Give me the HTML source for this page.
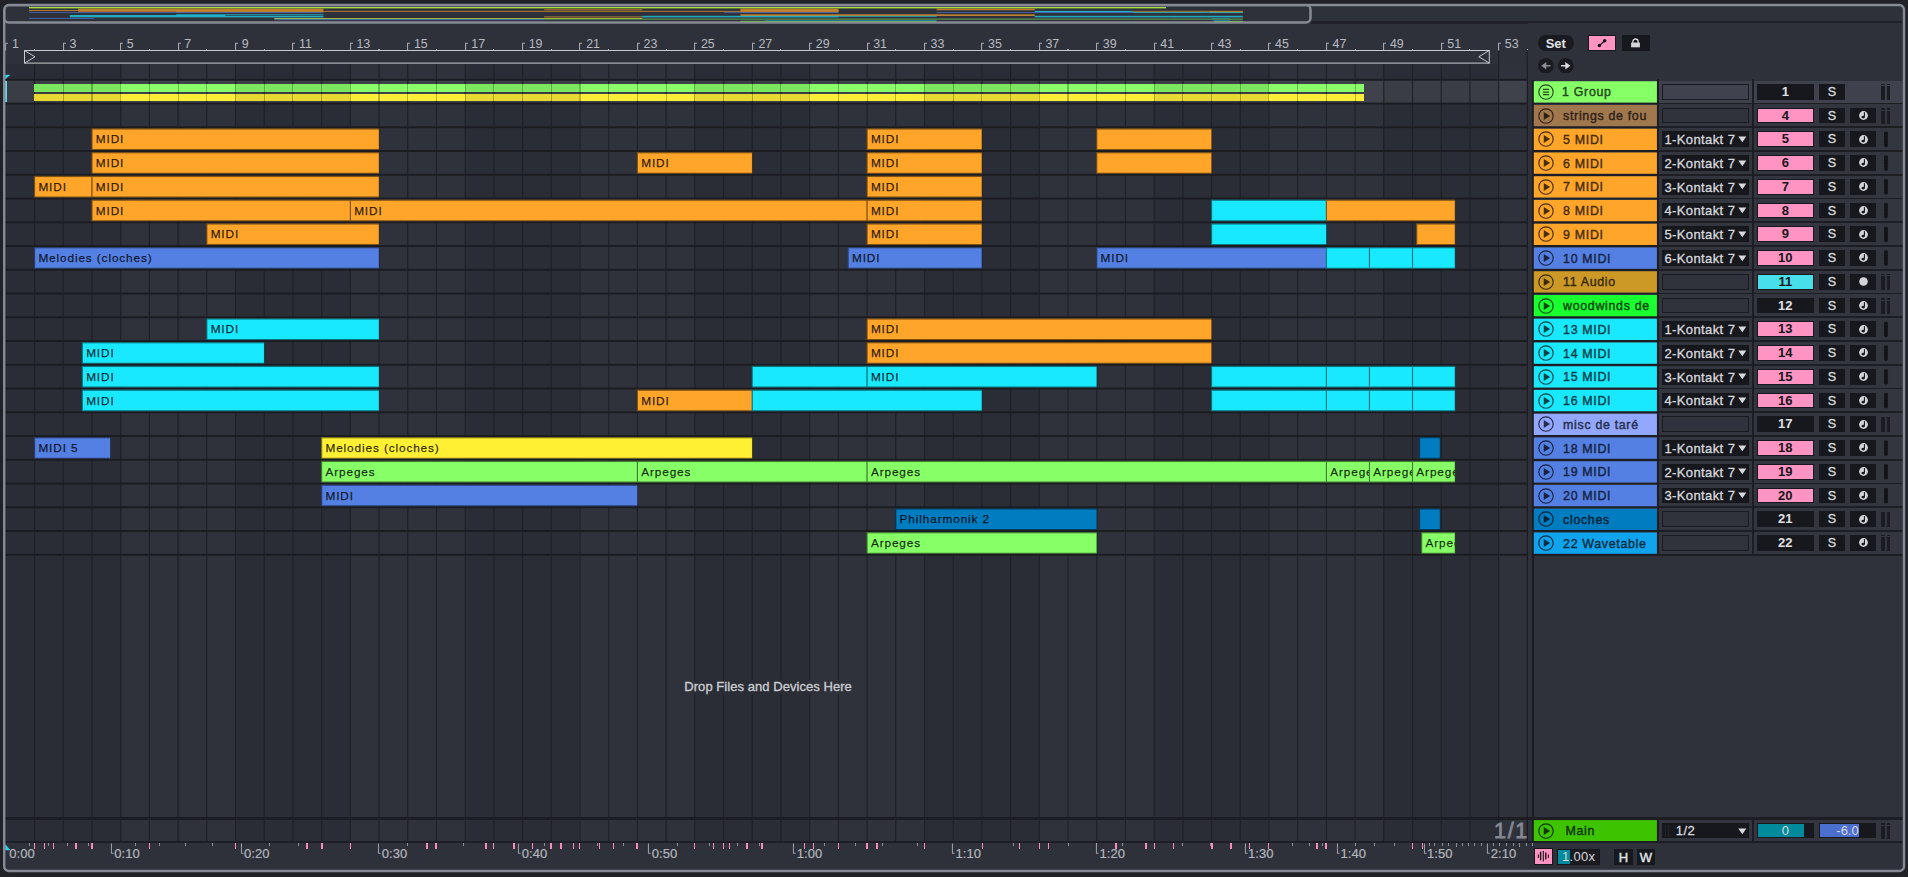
<!DOCTYPE html><html><head><meta charset="utf-8"><title>Arrangement</title><style>

html,body{margin:0;padding:0}
body{width:1908px;height:877px;overflow:hidden;position:relative;background:#212228;font-family:"Liberation Sans",sans-serif;font-size:13px;color:#c4c6cc}
div,span,svg{position:absolute;box-sizing:border-box}
.t{white-space:nowrap;line-height:1}
.clip{overflow:hidden}
.clip span{left:4.4px;top:5.35px;font-size:11.8px;letter-spacing:.88px;-webkit-text-stroke:.25px;color:rgba(0,0,0,.8);white-space:nowrap;line-height:1}
.hn{font-size:12.4px;letter-spacing:.68px;-webkit-text-stroke:.4px;white-space:nowrap;line-height:1}
.rt{font-size:13px;letter-spacing:.4px;-webkit-text-stroke:.3px;color:#d8dadf;white-space:nowrap;line-height:1}
.btn{background:#17181d;text-align:center;font-weight:normal;-webkit-text-stroke:.35px;font-size:12.6px;color:#d6d7db;line-height:1;white-space:nowrap}
.num{text-align:center;font-weight:bold;font-size:13px;line-height:1;white-space:nowrap}
.bn{font-size:12.4px;color:#b9bbc3;white-space:nowrap;line-height:1}
.tl{font-size:13px;letter-spacing:.1px;-webkit-text-stroke:.2px;color:#b4b6be;white-space:nowrap;line-height:1}

</style></head><body>
<div style="left:3.00px;top:4.00px;width:1902.00px;height:867.50px;background:#2e313a;border-radius:7px;"></div>
<div style="left:5.3px;top:64.0px;width:1521.70px;height:778.0px;overflow:hidden;background:#2a2d35">
<div style="left:114.83px;top:0.00px;width:114.83px;height:778.00px;background:#2f323b;"></div>
<div style="left:344.48px;top:0.00px;width:114.83px;height:778.00px;background:#2f323b;"></div>
<div style="left:574.14px;top:0.00px;width:114.83px;height:778.00px;background:#2f323b;"></div>
<div style="left:803.80px;top:0.00px;width:114.83px;height:778.00px;background:#2f323b;"></div>
<div style="left:1033.45px;top:0.00px;width:114.83px;height:778.00px;background:#2f323b;"></div>
<div style="left:1263.11px;top:0.00px;width:114.83px;height:778.00px;background:#2f323b;"></div>
<div style="left:1492.76px;top:0.00px;width:28.94px;height:778.00px;background:#2f323b;"></div>
</div>
<div style="left:5.30px;top:80.45px;width:1897.70px;height:22.40px;background:rgba(255,255,255,.078);"></div>
<svg style="left:0;top:0" width="1908" height="877" viewBox="0 0 1908 877"><rect x="34.01" y="64.0" width="1.15" height="778.0" fill="#1f2126"/><rect x="62.71" y="64.0" width="1.15" height="778.0" fill="#1f2126"/><rect x="91.42" y="64.0" width="1.15" height="778.0" fill="#1f2126"/><rect x="120.13" y="64.0" width="1.15" height="778.0" fill="#1f2126"/><rect x="148.84" y="64.0" width="1.15" height="778.0" fill="#1f2126"/><rect x="177.54" y="64.0" width="1.15" height="778.0" fill="#1f2126"/><rect x="206.25" y="64.0" width="1.15" height="778.0" fill="#1f2126"/><rect x="234.96" y="64.0" width="1.15" height="778.0" fill="#1f2126"/><rect x="263.66" y="64.0" width="1.15" height="778.0" fill="#1f2126"/><rect x="292.37" y="64.0" width="1.15" height="778.0" fill="#1f2126"/><rect x="321.08" y="64.0" width="1.15" height="778.0" fill="#1f2126"/><rect x="349.78" y="64.0" width="1.15" height="778.0" fill="#1f2126"/><rect x="378.49" y="64.0" width="1.15" height="778.0" fill="#1f2126"/><rect x="407.20" y="64.0" width="1.15" height="778.0" fill="#1f2126"/><rect x="435.91" y="64.0" width="1.15" height="778.0" fill="#1f2126"/><rect x="464.61" y="64.0" width="1.15" height="778.0" fill="#1f2126"/><rect x="493.32" y="64.0" width="1.15" height="778.0" fill="#1f2126"/><rect x="522.03" y="64.0" width="1.15" height="778.0" fill="#1f2126"/><rect x="550.73" y="64.0" width="1.15" height="778.0" fill="#1f2126"/><rect x="579.44" y="64.0" width="1.15" height="778.0" fill="#1f2126"/><rect x="608.15" y="64.0" width="1.15" height="778.0" fill="#1f2126"/><rect x="636.85" y="64.0" width="1.15" height="778.0" fill="#1f2126"/><rect x="665.56" y="64.0" width="1.15" height="778.0" fill="#1f2126"/><rect x="694.27" y="64.0" width="1.15" height="615.8" fill="#1f2126"/><rect x="694.27" y="694.2" width="1.15" height="147.79999999999995" fill="#1f2126"/><rect x="722.98" y="64.0" width="1.15" height="615.8" fill="#1f2126"/><rect x="722.98" y="694.2" width="1.15" height="147.79999999999995" fill="#1f2126"/><rect x="751.68" y="64.0" width="1.15" height="615.8" fill="#1f2126"/><rect x="751.68" y="694.2" width="1.15" height="147.79999999999995" fill="#1f2126"/><rect x="780.39" y="64.0" width="1.15" height="615.8" fill="#1f2126"/><rect x="780.39" y="694.2" width="1.15" height="147.79999999999995" fill="#1f2126"/><rect x="809.10" y="64.0" width="1.15" height="615.8" fill="#1f2126"/><rect x="809.10" y="694.2" width="1.15" height="147.79999999999995" fill="#1f2126"/><rect x="837.80" y="64.0" width="1.15" height="615.8" fill="#1f2126"/><rect x="837.80" y="694.2" width="1.15" height="147.79999999999995" fill="#1f2126"/><rect x="866.51" y="64.0" width="1.15" height="778.0" fill="#1f2126"/><rect x="895.22" y="64.0" width="1.15" height="778.0" fill="#1f2126"/><rect x="923.92" y="64.0" width="1.15" height="778.0" fill="#1f2126"/><rect x="952.63" y="64.0" width="1.15" height="778.0" fill="#1f2126"/><rect x="981.34" y="64.0" width="1.15" height="778.0" fill="#1f2126"/><rect x="1010.04" y="64.0" width="1.15" height="778.0" fill="#1f2126"/><rect x="1038.75" y="64.0" width="1.15" height="778.0" fill="#1f2126"/><rect x="1067.46" y="64.0" width="1.15" height="778.0" fill="#1f2126"/><rect x="1096.17" y="64.0" width="1.15" height="778.0" fill="#1f2126"/><rect x="1124.87" y="64.0" width="1.15" height="778.0" fill="#1f2126"/><rect x="1153.58" y="64.0" width="1.15" height="778.0" fill="#1f2126"/><rect x="1182.29" y="64.0" width="1.15" height="778.0" fill="#1f2126"/><rect x="1210.99" y="64.0" width="1.15" height="778.0" fill="#1f2126"/><rect x="1239.70" y="64.0" width="1.15" height="778.0" fill="#1f2126"/><rect x="1268.41" y="64.0" width="1.15" height="778.0" fill="#1f2126"/><rect x="1297.12" y="64.0" width="1.15" height="778.0" fill="#1f2126"/><rect x="1325.82" y="64.0" width="1.15" height="778.0" fill="#1f2126"/><rect x="1354.53" y="64.0" width="1.15" height="778.0" fill="#1f2126"/><rect x="1383.24" y="64.0" width="1.15" height="778.0" fill="#1f2126"/><rect x="1411.94" y="64.0" width="1.15" height="778.0" fill="#1f2126"/><rect x="1440.65" y="64.0" width="1.15" height="778.0" fill="#1f2126"/><rect x="1469.36" y="64.0" width="1.15" height="778.0" fill="#1f2126"/><rect x="1498.06" y="50.5" width="1.15" height="791.5" fill="#1f2126"/><rect x="1526.77" y="50.5" width="1.15" height="791.5" fill="#1f2126"/><rect x="5.3" y="78.85" width="1521.70" height="1.85" fill="#1b1c21"/><rect x="5.3" y="102.60" width="1521.70" height="1.85" fill="#1b1c21"/><rect x="5.3" y="126.35" width="1521.70" height="1.85" fill="#1b1c21"/><rect x="5.3" y="150.10" width="1521.70" height="1.85" fill="#1b1c21"/><rect x="5.3" y="173.85" width="1521.70" height="1.85" fill="#1b1c21"/><rect x="5.3" y="197.60" width="1521.70" height="1.85" fill="#1b1c21"/><rect x="5.3" y="221.35" width="1521.70" height="1.85" fill="#1b1c21"/><rect x="5.3" y="245.10" width="1521.70" height="1.85" fill="#1b1c21"/><rect x="5.3" y="268.85" width="1521.70" height="1.85" fill="#1b1c21"/><rect x="5.3" y="292.60" width="1521.70" height="1.85" fill="#1b1c21"/><rect x="5.3" y="316.35" width="1521.70" height="1.85" fill="#1b1c21"/><rect x="5.3" y="340.10" width="1521.70" height="1.85" fill="#1b1c21"/><rect x="5.3" y="363.85" width="1521.70" height="1.85" fill="#1b1c21"/><rect x="5.3" y="387.60" width="1521.70" height="1.85" fill="#1b1c21"/><rect x="5.3" y="411.35" width="1521.70" height="1.85" fill="#1b1c21"/><rect x="5.3" y="435.10" width="1521.70" height="1.85" fill="#1b1c21"/><rect x="5.3" y="458.85" width="1521.70" height="1.85" fill="#1b1c21"/><rect x="5.3" y="482.60" width="1521.70" height="1.85" fill="#1b1c21"/><rect x="5.3" y="506.35" width="1521.70" height="1.85" fill="#1b1c21"/><rect x="5.3" y="530.10" width="1521.70" height="1.85" fill="#1b1c21"/><rect x="5.3" y="553.85" width="1521.70" height="1.85" fill="#1b1c21"/></svg>
<div style="left:34.01px;top:80.75px;width:1330.28px;height:22px;overflow:hidden">
<div style="left:0.00px;top:3.00px;width:86.12px;height:8.50px;background:#7ce65f;"></div>
<div style="left:0.00px;top:13.05px;width:86.12px;height:7.20px;background:#e8d932;"></div>
<div style="left:86.12px;top:3.00px;width:114.83px;height:8.50px;background:#8afc69;"></div>
<div style="left:86.12px;top:13.05px;width:114.83px;height:7.20px;background:#ffee38;"></div>
<div style="left:200.95px;top:3.00px;width:114.83px;height:8.50px;background:#7ce65f;"></div>
<div style="left:200.95px;top:13.05px;width:114.83px;height:7.20px;background:#e8d932;"></div>
<div style="left:315.78px;top:3.00px;width:114.83px;height:8.50px;background:#8afc69;"></div>
<div style="left:315.78px;top:13.05px;width:114.83px;height:7.20px;background:#ffee38;"></div>
<div style="left:430.61px;top:3.00px;width:114.83px;height:8.50px;background:#7ce65f;"></div>
<div style="left:430.61px;top:13.05px;width:114.83px;height:7.20px;background:#e8d932;"></div>
<div style="left:545.43px;top:3.00px;width:114.83px;height:8.50px;background:#8afc69;"></div>
<div style="left:545.43px;top:13.05px;width:114.83px;height:7.20px;background:#ffee38;"></div>
<div style="left:660.26px;top:3.00px;width:114.83px;height:8.50px;background:#7ce65f;"></div>
<div style="left:660.26px;top:13.05px;width:114.83px;height:7.20px;background:#e8d932;"></div>
<div style="left:775.09px;top:3.00px;width:114.83px;height:8.50px;background:#8afc69;"></div>
<div style="left:775.09px;top:13.05px;width:114.83px;height:7.20px;background:#ffee38;"></div>
<div style="left:889.92px;top:3.00px;width:114.83px;height:8.50px;background:#7ce65f;"></div>
<div style="left:889.92px;top:13.05px;width:114.83px;height:7.20px;background:#e8d932;"></div>
<div style="left:1004.75px;top:3.00px;width:114.83px;height:8.50px;background:#8afc69;"></div>
<div style="left:1004.75px;top:13.05px;width:114.83px;height:7.20px;background:#ffee38;"></div>
<div style="left:1119.57px;top:3.00px;width:114.83px;height:8.50px;background:#7ce65f;"></div>
<div style="left:1119.57px;top:13.05px;width:114.83px;height:7.20px;background:#e8d932;"></div>
<div style="left:1234.40px;top:3.00px;width:95.88px;height:8.50px;background:#8afc69;"></div>
<div style="left:1234.40px;top:13.05px;width:95.88px;height:7.20px;background:#ffee38;"></div>
<div style="left:28.71px;top:3.00px;width:1.10px;height:8.50px;background:rgba(0,0,0,.25);"></div>
<div style="left:28.71px;top:13.05px;width:1.10px;height:7.20px;background:rgba(0,0,0,.25);"></div>
<div style="left:57.41px;top:3.00px;width:1.10px;height:8.50px;background:rgba(0,0,0,.25);"></div>
<div style="left:57.41px;top:13.05px;width:1.10px;height:7.20px;background:rgba(0,0,0,.25);"></div>
<div style="left:86.12px;top:3.00px;width:1.10px;height:8.50px;background:rgba(0,0,0,.25);"></div>
<div style="left:86.12px;top:13.05px;width:1.10px;height:7.20px;background:rgba(0,0,0,.25);"></div>
<div style="left:114.83px;top:3.00px;width:1.10px;height:8.50px;background:rgba(0,0,0,.25);"></div>
<div style="left:114.83px;top:13.05px;width:1.10px;height:7.20px;background:rgba(0,0,0,.25);"></div>
<div style="left:143.54px;top:3.00px;width:1.10px;height:8.50px;background:rgba(0,0,0,.25);"></div>
<div style="left:143.54px;top:13.05px;width:1.10px;height:7.20px;background:rgba(0,0,0,.25);"></div>
<div style="left:172.24px;top:3.00px;width:1.10px;height:8.50px;background:rgba(0,0,0,.25);"></div>
<div style="left:172.24px;top:13.05px;width:1.10px;height:7.20px;background:rgba(0,0,0,.25);"></div>
<div style="left:200.95px;top:3.00px;width:1.10px;height:8.50px;background:rgba(0,0,0,.25);"></div>
<div style="left:200.95px;top:13.05px;width:1.10px;height:7.20px;background:rgba(0,0,0,.25);"></div>
<div style="left:229.66px;top:3.00px;width:1.10px;height:8.50px;background:rgba(0,0,0,.25);"></div>
<div style="left:229.66px;top:13.05px;width:1.10px;height:7.20px;background:rgba(0,0,0,.25);"></div>
<div style="left:258.36px;top:3.00px;width:1.10px;height:8.50px;background:rgba(0,0,0,.25);"></div>
<div style="left:258.36px;top:13.05px;width:1.10px;height:7.20px;background:rgba(0,0,0,.25);"></div>
<div style="left:287.07px;top:3.00px;width:1.10px;height:8.50px;background:rgba(0,0,0,.25);"></div>
<div style="left:287.07px;top:13.05px;width:1.10px;height:7.20px;background:rgba(0,0,0,.25);"></div>
<div style="left:315.78px;top:3.00px;width:1.10px;height:8.50px;background:rgba(0,0,0,.25);"></div>
<div style="left:315.78px;top:13.05px;width:1.10px;height:7.20px;background:rgba(0,0,0,.25);"></div>
<div style="left:344.48px;top:3.00px;width:1.10px;height:8.50px;background:rgba(0,0,0,.25);"></div>
<div style="left:344.48px;top:13.05px;width:1.10px;height:7.20px;background:rgba(0,0,0,.25);"></div>
<div style="left:373.19px;top:3.00px;width:1.10px;height:8.50px;background:rgba(0,0,0,.25);"></div>
<div style="left:373.19px;top:13.05px;width:1.10px;height:7.20px;background:rgba(0,0,0,.25);"></div>
<div style="left:401.90px;top:3.00px;width:1.10px;height:8.50px;background:rgba(0,0,0,.25);"></div>
<div style="left:401.90px;top:13.05px;width:1.10px;height:7.20px;background:rgba(0,0,0,.25);"></div>
<div style="left:430.61px;top:3.00px;width:1.10px;height:8.50px;background:rgba(0,0,0,.25);"></div>
<div style="left:430.61px;top:13.05px;width:1.10px;height:7.20px;background:rgba(0,0,0,.25);"></div>
<div style="left:459.31px;top:3.00px;width:1.10px;height:8.50px;background:rgba(0,0,0,.25);"></div>
<div style="left:459.31px;top:13.05px;width:1.10px;height:7.20px;background:rgba(0,0,0,.25);"></div>
<div style="left:488.02px;top:3.00px;width:1.10px;height:8.50px;background:rgba(0,0,0,.25);"></div>
<div style="left:488.02px;top:13.05px;width:1.10px;height:7.20px;background:rgba(0,0,0,.25);"></div>
<div style="left:516.73px;top:3.00px;width:1.10px;height:8.50px;background:rgba(0,0,0,.25);"></div>
<div style="left:516.73px;top:13.05px;width:1.10px;height:7.20px;background:rgba(0,0,0,.25);"></div>
<div style="left:545.43px;top:3.00px;width:1.10px;height:8.50px;background:rgba(0,0,0,.25);"></div>
<div style="left:545.43px;top:13.05px;width:1.10px;height:7.20px;background:rgba(0,0,0,.25);"></div>
<div style="left:574.14px;top:3.00px;width:1.10px;height:8.50px;background:rgba(0,0,0,.25);"></div>
<div style="left:574.14px;top:13.05px;width:1.10px;height:7.20px;background:rgba(0,0,0,.25);"></div>
<div style="left:602.85px;top:3.00px;width:1.10px;height:8.50px;background:rgba(0,0,0,.25);"></div>
<div style="left:602.85px;top:13.05px;width:1.10px;height:7.20px;background:rgba(0,0,0,.25);"></div>
<div style="left:631.55px;top:3.00px;width:1.10px;height:8.50px;background:rgba(0,0,0,.25);"></div>
<div style="left:631.55px;top:13.05px;width:1.10px;height:7.20px;background:rgba(0,0,0,.25);"></div>
<div style="left:660.26px;top:3.00px;width:1.10px;height:8.50px;background:rgba(0,0,0,.25);"></div>
<div style="left:660.26px;top:13.05px;width:1.10px;height:7.20px;background:rgba(0,0,0,.25);"></div>
<div style="left:688.97px;top:3.00px;width:1.10px;height:8.50px;background:rgba(0,0,0,.25);"></div>
<div style="left:688.97px;top:13.05px;width:1.10px;height:7.20px;background:rgba(0,0,0,.25);"></div>
<div style="left:717.68px;top:3.00px;width:1.10px;height:8.50px;background:rgba(0,0,0,.25);"></div>
<div style="left:717.68px;top:13.05px;width:1.10px;height:7.20px;background:rgba(0,0,0,.25);"></div>
<div style="left:746.38px;top:3.00px;width:1.10px;height:8.50px;background:rgba(0,0,0,.25);"></div>
<div style="left:746.38px;top:13.05px;width:1.10px;height:7.20px;background:rgba(0,0,0,.25);"></div>
<div style="left:775.09px;top:3.00px;width:1.10px;height:8.50px;background:rgba(0,0,0,.25);"></div>
<div style="left:775.09px;top:13.05px;width:1.10px;height:7.20px;background:rgba(0,0,0,.25);"></div>
<div style="left:803.80px;top:3.00px;width:1.10px;height:8.50px;background:rgba(0,0,0,.25);"></div>
<div style="left:803.80px;top:13.05px;width:1.10px;height:7.20px;background:rgba(0,0,0,.25);"></div>
<div style="left:832.50px;top:3.00px;width:1.10px;height:8.50px;background:rgba(0,0,0,.25);"></div>
<div style="left:832.50px;top:13.05px;width:1.10px;height:7.20px;background:rgba(0,0,0,.25);"></div>
<div style="left:861.21px;top:3.00px;width:1.10px;height:8.50px;background:rgba(0,0,0,.25);"></div>
<div style="left:861.21px;top:13.05px;width:1.10px;height:7.20px;background:rgba(0,0,0,.25);"></div>
<div style="left:889.92px;top:3.00px;width:1.10px;height:8.50px;background:rgba(0,0,0,.25);"></div>
<div style="left:889.92px;top:13.05px;width:1.10px;height:7.20px;background:rgba(0,0,0,.25);"></div>
<div style="left:918.62px;top:3.00px;width:1.10px;height:8.50px;background:rgba(0,0,0,.25);"></div>
<div style="left:918.62px;top:13.05px;width:1.10px;height:7.20px;background:rgba(0,0,0,.25);"></div>
<div style="left:947.33px;top:3.00px;width:1.10px;height:8.50px;background:rgba(0,0,0,.25);"></div>
<div style="left:947.33px;top:13.05px;width:1.10px;height:7.20px;background:rgba(0,0,0,.25);"></div>
<div style="left:976.04px;top:3.00px;width:1.10px;height:8.50px;background:rgba(0,0,0,.25);"></div>
<div style="left:976.04px;top:13.05px;width:1.10px;height:7.20px;background:rgba(0,0,0,.25);"></div>
<div style="left:1004.75px;top:3.00px;width:1.10px;height:8.50px;background:rgba(0,0,0,.25);"></div>
<div style="left:1004.75px;top:13.05px;width:1.10px;height:7.20px;background:rgba(0,0,0,.25);"></div>
<div style="left:1033.45px;top:3.00px;width:1.10px;height:8.50px;background:rgba(0,0,0,.25);"></div>
<div style="left:1033.45px;top:13.05px;width:1.10px;height:7.20px;background:rgba(0,0,0,.25);"></div>
<div style="left:1062.16px;top:3.00px;width:1.10px;height:8.50px;background:rgba(0,0,0,.25);"></div>
<div style="left:1062.16px;top:13.05px;width:1.10px;height:7.20px;background:rgba(0,0,0,.25);"></div>
<div style="left:1090.87px;top:3.00px;width:1.10px;height:8.50px;background:rgba(0,0,0,.25);"></div>
<div style="left:1090.87px;top:13.05px;width:1.10px;height:7.20px;background:rgba(0,0,0,.25);"></div>
<div style="left:1119.57px;top:3.00px;width:1.10px;height:8.50px;background:rgba(0,0,0,.25);"></div>
<div style="left:1119.57px;top:13.05px;width:1.10px;height:7.20px;background:rgba(0,0,0,.25);"></div>
<div style="left:1148.28px;top:3.00px;width:1.10px;height:8.50px;background:rgba(0,0,0,.25);"></div>
<div style="left:1148.28px;top:13.05px;width:1.10px;height:7.20px;background:rgba(0,0,0,.25);"></div>
<div style="left:1176.99px;top:3.00px;width:1.10px;height:8.50px;background:rgba(0,0,0,.25);"></div>
<div style="left:1176.99px;top:13.05px;width:1.10px;height:7.20px;background:rgba(0,0,0,.25);"></div>
<div style="left:1205.69px;top:3.00px;width:1.10px;height:8.50px;background:rgba(0,0,0,.25);"></div>
<div style="left:1205.69px;top:13.05px;width:1.10px;height:7.20px;background:rgba(0,0,0,.25);"></div>
<div style="left:1234.40px;top:3.00px;width:1.10px;height:8.50px;background:rgba(0,0,0,.25);"></div>
<div style="left:1234.40px;top:13.05px;width:1.10px;height:7.20px;background:rgba(0,0,0,.25);"></div>
<div style="left:1263.11px;top:3.00px;width:1.10px;height:8.50px;background:rgba(0,0,0,.25);"></div>
<div style="left:1263.11px;top:13.05px;width:1.10px;height:7.20px;background:rgba(0,0,0,.25);"></div>
<div style="left:1291.81px;top:3.00px;width:1.10px;height:8.50px;background:rgba(0,0,0,.25);"></div>
<div style="left:1291.81px;top:13.05px;width:1.10px;height:7.20px;background:rgba(0,0,0,.25);"></div>
<div style="left:1320.52px;top:3.00px;width:1.10px;height:8.50px;background:rgba(0,0,0,.25);"></div>
<div style="left:1320.52px;top:13.05px;width:1.10px;height:7.20px;background:rgba(0,0,0,.25);"></div>
</div>
<svg style="left:0;top:0" width="1908" height="877" viewBox="0 0 1908 877"><rect x="91.42" y="128.30" width="287.77" height="21.7" fill="#7f5214"/><rect x="92.57" y="129.55" width="286.17" height="19.45" fill="#ffa529"/><rect x="866.51" y="128.30" width="115.53" height="21.7" fill="#7f5214"/><rect x="867.66" y="129.55" width="113.93" height="19.45" fill="#ffa529"/><rect x="1096.17" y="128.30" width="115.53" height="21.7" fill="#7f5214"/><rect x="1097.32" y="129.55" width="113.93" height="19.45" fill="#ffa529"/><rect x="91.42" y="152.05" width="287.77" height="21.7" fill="#7f5214"/><rect x="92.57" y="153.30" width="286.17" height="19.45" fill="#ffa529"/><rect x="636.85" y="152.05" width="115.53" height="21.7" fill="#7f5214"/><rect x="638.00" y="153.30" width="113.93" height="19.45" fill="#ffa529"/><rect x="866.51" y="152.05" width="115.53" height="21.7" fill="#7f5214"/><rect x="867.66" y="153.30" width="113.93" height="19.45" fill="#ffa529"/><rect x="1096.17" y="152.05" width="115.53" height="21.7" fill="#7f5214"/><rect x="1097.32" y="153.30" width="113.93" height="19.45" fill="#ffa529"/><rect x="34.01" y="175.80" width="58.11" height="21.7" fill="#7f5214"/><rect x="35.16" y="177.05" width="56.51" height="19.45" fill="#ffa529"/><rect x="91.42" y="175.80" width="287.77" height="21.7" fill="#7f5214"/><rect x="92.57" y="177.05" width="286.17" height="19.45" fill="#ffa529"/><rect x="866.51" y="175.80" width="115.53" height="21.7" fill="#7f5214"/><rect x="867.66" y="177.05" width="113.93" height="19.45" fill="#ffa529"/><rect x="91.42" y="199.55" width="259.06" height="21.7" fill="#7f5214"/><rect x="92.57" y="200.80" width="257.46" height="19.45" fill="#ffa529"/><rect x="349.78" y="199.55" width="517.43" height="21.7" fill="#7f5214"/><rect x="350.93" y="200.80" width="515.83" height="19.45" fill="#ffa529"/><rect x="866.51" y="199.55" width="115.53" height="21.7" fill="#7f5214"/><rect x="867.66" y="200.80" width="113.93" height="19.45" fill="#ffa529"/><rect x="1210.99" y="199.55" width="115.53" height="21.7" fill="#0c747f"/><rect x="1212.14" y="200.80" width="113.93" height="19.45" fill="#19e9ff"/><rect x="1325.82" y="199.55" width="129.31" height="21.7" fill="#7f5214"/><rect x="1326.97" y="200.80" width="127.71" height="19.45" fill="#ffa529"/><rect x="206.25" y="223.30" width="172.94" height="21.7" fill="#7f5214"/><rect x="207.40" y="224.55" width="171.34" height="19.45" fill="#ffa529"/><rect x="866.51" y="223.30" width="115.53" height="21.7" fill="#7f5214"/><rect x="867.66" y="224.55" width="113.93" height="19.45" fill="#ffa529"/><rect x="1210.99" y="223.30" width="115.53" height="21.7" fill="#0c747f"/><rect x="1212.14" y="224.55" width="113.93" height="19.45" fill="#19e9ff"/><rect x="1416.11" y="223.30" width="39.02" height="21.7" fill="#7f5214"/><rect x="1417.26" y="224.55" width="37.42" height="19.45" fill="#ffa529"/><rect x="34.01" y="247.05" width="345.18" height="21.7" fill="#2a4072"/><rect x="35.16" y="248.30" width="343.58" height="19.45" fill="#5480e4"/><rect x="847.56" y="247.05" width="134.47" height="21.7" fill="#2a4072"/><rect x="848.71" y="248.30" width="132.87" height="19.45" fill="#5480e4"/><rect x="1096.17" y="247.05" width="230.36" height="21.7" fill="#2a4072"/><rect x="1097.32" y="248.30" width="228.76" height="19.45" fill="#5480e4"/><rect x="1325.82" y="247.05" width="43.76" height="21.7" fill="#0c747f"/><rect x="1326.97" y="248.30" width="42.16" height="19.45" fill="#19e9ff"/><rect x="1368.88" y="247.05" width="43.76" height="21.7" fill="#0c747f"/><rect x="1370.03" y="248.30" width="42.16" height="19.45" fill="#19e9ff"/><rect x="1411.94" y="247.05" width="43.19" height="21.7" fill="#0c747f"/><rect x="1413.09" y="248.30" width="41.59" height="19.45" fill="#19e9ff"/><rect x="206.25" y="318.30" width="172.94" height="21.7" fill="#0c747f"/><rect x="207.40" y="319.55" width="171.34" height="19.45" fill="#19e9ff"/><rect x="866.51" y="318.30" width="345.18" height="21.7" fill="#7f5214"/><rect x="867.66" y="319.55" width="343.58" height="19.45" fill="#ffa529"/><rect x="81.78" y="342.05" width="182.59" height="21.7" fill="#0c747f"/><rect x="82.93" y="343.30" width="180.99" height="19.45" fill="#19e9ff"/><rect x="866.51" y="342.05" width="345.18" height="21.7" fill="#7f5214"/><rect x="867.66" y="343.30" width="343.58" height="19.45" fill="#ffa529"/><rect x="81.78" y="365.80" width="297.42" height="21.7" fill="#0c747f"/><rect x="82.93" y="367.05" width="295.82" height="19.45" fill="#19e9ff"/><rect x="751.68" y="365.80" width="115.53" height="21.7" fill="#0c747f"/><rect x="752.83" y="367.05" width="113.93" height="19.45" fill="#19e9ff"/><rect x="866.51" y="365.80" width="230.36" height="21.7" fill="#0c747f"/><rect x="867.66" y="367.05" width="228.76" height="19.45" fill="#19e9ff"/><rect x="1210.99" y="365.80" width="115.53" height="21.7" fill="#0c747f"/><rect x="1212.14" y="367.05" width="113.93" height="19.45" fill="#19e9ff"/><rect x="1325.82" y="365.80" width="43.76" height="21.7" fill="#0c747f"/><rect x="1326.97" y="367.05" width="42.16" height="19.45" fill="#19e9ff"/><rect x="1368.88" y="365.80" width="43.76" height="21.7" fill="#0c747f"/><rect x="1370.03" y="367.05" width="42.16" height="19.45" fill="#19e9ff"/><rect x="1411.94" y="365.80" width="43.19" height="21.7" fill="#0c747f"/><rect x="1413.09" y="367.05" width="41.59" height="19.45" fill="#19e9ff"/><rect x="81.78" y="389.55" width="297.42" height="21.7" fill="#0c747f"/><rect x="82.93" y="390.80" width="295.82" height="19.45" fill="#19e9ff"/><rect x="636.85" y="389.55" width="115.53" height="21.7" fill="#7f5214"/><rect x="638.00" y="390.80" width="113.93" height="19.45" fill="#ffa529"/><rect x="751.68" y="389.55" width="230.36" height="21.7" fill="#0c747f"/><rect x="752.83" y="390.80" width="228.76" height="19.45" fill="#19e9ff"/><rect x="1210.99" y="389.55" width="115.53" height="21.7" fill="#0c747f"/><rect x="1212.14" y="390.80" width="113.93" height="19.45" fill="#19e9ff"/><rect x="1325.82" y="389.55" width="43.76" height="21.7" fill="#0c747f"/><rect x="1326.97" y="390.80" width="42.16" height="19.45" fill="#19e9ff"/><rect x="1368.88" y="389.55" width="43.76" height="21.7" fill="#0c747f"/><rect x="1370.03" y="390.80" width="42.16" height="19.45" fill="#19e9ff"/><rect x="1411.94" y="389.55" width="43.19" height="21.7" fill="#0c747f"/><rect x="1413.09" y="390.80" width="41.59" height="19.45" fill="#19e9ff"/><rect x="34.01" y="437.05" width="76.49" height="21.7" fill="#2a4072"/><rect x="35.16" y="438.30" width="74.89" height="19.45" fill="#5480e4"/><rect x="321.08" y="437.05" width="431.31" height="21.7" fill="#7f781a"/><rect x="322.23" y="438.30" width="429.71" height="19.45" fill="#fff034"/><rect x="1418.98" y="437.05" width="21.23" height="21.7" fill="#003e60"/><rect x="1420.13" y="438.30" width="19.63" height="19.45" fill="#007dc0"/><rect x="321.08" y="460.80" width="316.48" height="21.7" fill="#437f33"/><rect x="322.23" y="462.05" width="314.88" height="19.45" fill="#87ff67"/><rect x="636.85" y="460.80" width="230.36" height="21.7" fill="#437f33"/><rect x="638.00" y="462.05" width="228.76" height="19.45" fill="#87ff67"/><rect x="866.51" y="460.80" width="460.01" height="21.7" fill="#437f33"/><rect x="867.66" y="462.05" width="458.41" height="19.45" fill="#87ff67"/><rect x="1325.82" y="460.80" width="43.76" height="21.7" fill="#437f33"/><rect x="1326.97" y="462.05" width="42.16" height="19.45" fill="#87ff67"/><rect x="1368.88" y="460.80" width="43.76" height="21.7" fill="#437f33"/><rect x="1370.03" y="462.05" width="42.16" height="19.45" fill="#87ff67"/><rect x="1411.94" y="460.80" width="43.19" height="21.7" fill="#437f33"/><rect x="1413.09" y="462.05" width="41.59" height="19.45" fill="#87ff67"/><rect x="321.08" y="484.55" width="316.48" height="21.7" fill="#2a4072"/><rect x="322.23" y="485.80" width="314.88" height="19.45" fill="#5480e4"/><rect x="895.22" y="508.30" width="201.65" height="21.7" fill="#003e60"/><rect x="896.37" y="509.55" width="200.05" height="19.45" fill="#007dc0"/><rect x="1418.98" y="508.30" width="21.23" height="21.7" fill="#003e60"/><rect x="1420.13" y="509.55" width="19.63" height="19.45" fill="#007dc0"/><rect x="866.51" y="532.05" width="230.36" height="21.7" fill="#437f33"/><rect x="867.66" y="533.30" width="228.76" height="19.45" fill="#87ff67"/><rect x="1421.13" y="532.05" width="34.00" height="21.7" fill="#437f33"/><rect x="1422.28" y="533.30" width="32.40" height="19.45" fill="#87ff67"/></svg>
<div class="clip" style="left:91.42px;top:129.05px;width:287.17px;height:20.4px"><span>MIDI</span></div>
<div class="clip" style="left:866.51px;top:129.05px;width:114.93px;height:20.4px"><span>MIDI</span></div>
<div class="clip" style="left:91.42px;top:152.80px;width:287.17px;height:20.4px"><span>MIDI</span></div>
<div class="clip" style="left:636.85px;top:152.80px;width:114.93px;height:20.4px"><span>MIDI</span></div>
<div class="clip" style="left:866.51px;top:152.80px;width:114.93px;height:20.4px"><span>MIDI</span></div>
<div class="clip" style="left:34.01px;top:176.55px;width:57.51px;height:20.4px"><span>MIDI</span></div>
<div class="clip" style="left:91.42px;top:176.55px;width:287.17px;height:20.4px"><span>MIDI</span></div>
<div class="clip" style="left:866.51px;top:176.55px;width:114.93px;height:20.4px"><span>MIDI</span></div>
<div class="clip" style="left:91.42px;top:200.30px;width:258.46px;height:20.4px"><span>MIDI</span></div>
<div class="clip" style="left:349.78px;top:200.30px;width:516.83px;height:20.4px"><span>MIDI</span></div>
<div class="clip" style="left:866.51px;top:200.30px;width:114.93px;height:20.4px"><span>MIDI</span></div>
<div class="clip" style="left:206.25px;top:224.05px;width:172.34px;height:20.4px"><span>MIDI</span></div>
<div class="clip" style="left:866.51px;top:224.05px;width:114.93px;height:20.4px"><span>MIDI</span></div>
<div class="clip" style="left:34.01px;top:247.80px;width:344.58px;height:20.4px"><span>Melodies (cloches)</span></div>
<div class="clip" style="left:847.56px;top:247.80px;width:133.87px;height:20.4px"><span>MIDI</span></div>
<div class="clip" style="left:1096.17px;top:247.80px;width:229.76px;height:20.4px"><span>MIDI</span></div>
<div class="clip" style="left:206.25px;top:319.05px;width:172.34px;height:20.4px"><span>MIDI</span></div>
<div class="clip" style="left:866.51px;top:319.05px;width:344.58px;height:20.4px"><span>MIDI</span></div>
<div class="clip" style="left:81.78px;top:342.80px;width:181.99px;height:20.4px"><span>MIDI</span></div>
<div class="clip" style="left:866.51px;top:342.80px;width:344.58px;height:20.4px"><span>MIDI</span></div>
<div class="clip" style="left:81.78px;top:366.55px;width:296.82px;height:20.4px"><span>MIDI</span></div>
<div class="clip" style="left:866.51px;top:366.55px;width:229.76px;height:20.4px"><span>MIDI</span></div>
<div class="clip" style="left:81.78px;top:390.30px;width:296.82px;height:20.4px"><span>MIDI</span></div>
<div class="clip" style="left:636.85px;top:390.30px;width:114.93px;height:20.4px"><span>MIDI</span></div>
<div class="clip" style="left:34.01px;top:437.80px;width:75.89px;height:20.4px"><span>MIDI 5</span></div>
<div class="clip" style="left:321.08px;top:437.80px;width:430.71px;height:20.4px"><span>Melodies (cloches)</span></div>
<div class="clip" style="left:321.08px;top:461.55px;width:315.88px;height:20.4px"><span>Arpeges</span></div>
<div class="clip" style="left:636.85px;top:461.55px;width:229.76px;height:20.4px"><span>Arpeges</span></div>
<div class="clip" style="left:866.51px;top:461.55px;width:459.41px;height:20.4px"><span>Arpeges</span></div>
<div class="clip" style="left:1325.82px;top:461.55px;width:43.16px;height:20.4px"><span>Arpeges</span></div>
<div class="clip" style="left:1368.88px;top:461.55px;width:43.16px;height:20.4px"><span>Arpeges</span></div>
<div class="clip" style="left:1411.94px;top:461.55px;width:42.59px;height:20.4px"><span>Arpeges</span></div>
<div class="clip" style="left:321.08px;top:485.30px;width:315.88px;height:20.4px"><span>MIDI</span></div>
<div class="clip" style="left:895.22px;top:509.05px;width:201.05px;height:20.4px"><span>Philharmonik 2</span></div>
<div class="clip" style="left:866.51px;top:532.80px;width:229.76px;height:20.4px"><span>Arpeges</span></div>
<div class="clip" style="left:1421.13px;top:532.80px;width:33.40px;height:20.4px"><span>Arpeges</span></div>
<div style="left:5.20px;top:80.75px;width:1.70px;height:21.60px;background:#5fd8ee;"></div>
<svg style="left:5px;top:73.5px" width="7" height="6" viewBox="0 0 7 6"><path d="M0.2 0.8 L5.4 0.8 L0.2 5.2 Z" fill="#2fd3ee"/></svg>
<div class="t" style="left:684.3px;top:680.3px;font-size:13px;letter-spacing:.05px;-webkit-text-stroke:.35px;color:#c9cbd1">Drop Files and Devices Here</div>
<div class="t" style="left:1494px;top:821.1px;font-size:21.5px;color:#858892;-webkit-text-stroke:.8px;letter-spacing:1.7px">1/1</div>
<svg style="left:4.30px;top:42px" width="6" height="9" viewBox="0 0 6 9"><path d="M1.55 8.5 V1.3 H4" fill="none" stroke="#a3a6ae" stroke-width="1.1"/></svg>
<div class="bn" style="left:12.00px;top:37.6px">1</div>
<svg style="left:61.71px;top:42px" width="6" height="9" viewBox="0 0 6 9"><path d="M1.55 8.5 V1.3 H4" fill="none" stroke="#a3a6ae" stroke-width="1.1"/></svg>
<div class="bn" style="left:69.41px;top:37.6px">3</div>
<svg style="left:119.13px;top:42px" width="6" height="9" viewBox="0 0 6 9"><path d="M1.55 8.5 V1.3 H4" fill="none" stroke="#a3a6ae" stroke-width="1.1"/></svg>
<div class="bn" style="left:126.83px;top:37.6px">5</div>
<svg style="left:176.54px;top:42px" width="6" height="9" viewBox="0 0 6 9"><path d="M1.55 8.5 V1.3 H4" fill="none" stroke="#a3a6ae" stroke-width="1.1"/></svg>
<div class="bn" style="left:184.24px;top:37.6px">7</div>
<svg style="left:233.96px;top:42px" width="6" height="9" viewBox="0 0 6 9"><path d="M1.55 8.5 V1.3 H4" fill="none" stroke="#a3a6ae" stroke-width="1.1"/></svg>
<div class="bn" style="left:241.66px;top:37.6px">9</div>
<svg style="left:291.37px;top:42px" width="6" height="9" viewBox="0 0 6 9"><path d="M1.55 8.5 V1.3 H4" fill="none" stroke="#a3a6ae" stroke-width="1.1"/></svg>
<div class="bn" style="left:299.07px;top:37.6px">11</div>
<svg style="left:348.78px;top:42px" width="6" height="9" viewBox="0 0 6 9"><path d="M1.55 8.5 V1.3 H4" fill="none" stroke="#a3a6ae" stroke-width="1.1"/></svg>
<div class="bn" style="left:356.48px;top:37.6px">13</div>
<svg style="left:406.20px;top:42px" width="6" height="9" viewBox="0 0 6 9"><path d="M1.55 8.5 V1.3 H4" fill="none" stroke="#a3a6ae" stroke-width="1.1"/></svg>
<div class="bn" style="left:413.90px;top:37.6px">15</div>
<svg style="left:463.61px;top:42px" width="6" height="9" viewBox="0 0 6 9"><path d="M1.55 8.5 V1.3 H4" fill="none" stroke="#a3a6ae" stroke-width="1.1"/></svg>
<div class="bn" style="left:471.31px;top:37.6px">17</div>
<svg style="left:521.03px;top:42px" width="6" height="9" viewBox="0 0 6 9"><path d="M1.55 8.5 V1.3 H4" fill="none" stroke="#a3a6ae" stroke-width="1.1"/></svg>
<div class="bn" style="left:528.73px;top:37.6px">19</div>
<svg style="left:578.44px;top:42px" width="6" height="9" viewBox="0 0 6 9"><path d="M1.55 8.5 V1.3 H4" fill="none" stroke="#a3a6ae" stroke-width="1.1"/></svg>
<div class="bn" style="left:586.14px;top:37.6px">21</div>
<svg style="left:635.85px;top:42px" width="6" height="9" viewBox="0 0 6 9"><path d="M1.55 8.5 V1.3 H4" fill="none" stroke="#a3a6ae" stroke-width="1.1"/></svg>
<div class="bn" style="left:643.55px;top:37.6px">23</div>
<svg style="left:693.27px;top:42px" width="6" height="9" viewBox="0 0 6 9"><path d="M1.55 8.5 V1.3 H4" fill="none" stroke="#a3a6ae" stroke-width="1.1"/></svg>
<div class="bn" style="left:700.97px;top:37.6px">25</div>
<svg style="left:750.68px;top:42px" width="6" height="9" viewBox="0 0 6 9"><path d="M1.55 8.5 V1.3 H4" fill="none" stroke="#a3a6ae" stroke-width="1.1"/></svg>
<div class="bn" style="left:758.38px;top:37.6px">27</div>
<svg style="left:808.10px;top:42px" width="6" height="9" viewBox="0 0 6 9"><path d="M1.55 8.5 V1.3 H4" fill="none" stroke="#a3a6ae" stroke-width="1.1"/></svg>
<div class="bn" style="left:815.80px;top:37.6px">29</div>
<svg style="left:865.51px;top:42px" width="6" height="9" viewBox="0 0 6 9"><path d="M1.55 8.5 V1.3 H4" fill="none" stroke="#a3a6ae" stroke-width="1.1"/></svg>
<div class="bn" style="left:873.21px;top:37.6px">31</div>
<svg style="left:922.92px;top:42px" width="6" height="9" viewBox="0 0 6 9"><path d="M1.55 8.5 V1.3 H4" fill="none" stroke="#a3a6ae" stroke-width="1.1"/></svg>
<div class="bn" style="left:930.62px;top:37.6px">33</div>
<svg style="left:980.34px;top:42px" width="6" height="9" viewBox="0 0 6 9"><path d="M1.55 8.5 V1.3 H4" fill="none" stroke="#a3a6ae" stroke-width="1.1"/></svg>
<div class="bn" style="left:988.04px;top:37.6px">35</div>
<svg style="left:1037.75px;top:42px" width="6" height="9" viewBox="0 0 6 9"><path d="M1.55 8.5 V1.3 H4" fill="none" stroke="#a3a6ae" stroke-width="1.1"/></svg>
<div class="bn" style="left:1045.45px;top:37.6px">37</div>
<svg style="left:1095.17px;top:42px" width="6" height="9" viewBox="0 0 6 9"><path d="M1.55 8.5 V1.3 H4" fill="none" stroke="#a3a6ae" stroke-width="1.1"/></svg>
<div class="bn" style="left:1102.87px;top:37.6px">39</div>
<svg style="left:1152.58px;top:42px" width="6" height="9" viewBox="0 0 6 9"><path d="M1.55 8.5 V1.3 H4" fill="none" stroke="#a3a6ae" stroke-width="1.1"/></svg>
<div class="bn" style="left:1160.28px;top:37.6px">41</div>
<svg style="left:1209.99px;top:42px" width="6" height="9" viewBox="0 0 6 9"><path d="M1.55 8.5 V1.3 H4" fill="none" stroke="#a3a6ae" stroke-width="1.1"/></svg>
<div class="bn" style="left:1217.69px;top:37.6px">43</div>
<svg style="left:1267.41px;top:42px" width="6" height="9" viewBox="0 0 6 9"><path d="M1.55 8.5 V1.3 H4" fill="none" stroke="#a3a6ae" stroke-width="1.1"/></svg>
<div class="bn" style="left:1275.11px;top:37.6px">45</div>
<svg style="left:1324.82px;top:42px" width="6" height="9" viewBox="0 0 6 9"><path d="M1.55 8.5 V1.3 H4" fill="none" stroke="#a3a6ae" stroke-width="1.1"/></svg>
<div class="bn" style="left:1332.52px;top:37.6px">47</div>
<svg style="left:1382.24px;top:42px" width="6" height="9" viewBox="0 0 6 9"><path d="M1.55 8.5 V1.3 H4" fill="none" stroke="#a3a6ae" stroke-width="1.1"/></svg>
<div class="bn" style="left:1389.94px;top:37.6px">49</div>
<svg style="left:1439.65px;top:42px" width="6" height="9" viewBox="0 0 6 9"><path d="M1.55 8.5 V1.3 H4" fill="none" stroke="#a3a6ae" stroke-width="1.1"/></svg>
<div class="bn" style="left:1447.35px;top:37.6px">51</div>
<svg style="left:1497.06px;top:42px" width="6" height="9" viewBox="0 0 6 9"><path d="M1.55 8.5 V1.3 H4" fill="none" stroke="#a3a6ae" stroke-width="1.1"/></svg>
<div class="bn" style="left:1504.76px;top:37.6px">53</div>
<div style="left:34.01px;top:49.00px;width:1.10px;height:1.30px;background:#a3a6ae;"></div>
<div style="left:91.42px;top:49.00px;width:1.10px;height:1.30px;background:#a3a6ae;"></div>
<div style="left:148.84px;top:49.00px;width:1.10px;height:1.30px;background:#a3a6ae;"></div>
<div style="left:206.25px;top:49.00px;width:1.10px;height:1.30px;background:#a3a6ae;"></div>
<div style="left:263.66px;top:49.00px;width:1.10px;height:1.30px;background:#a3a6ae;"></div>
<div style="left:321.08px;top:49.00px;width:1.10px;height:1.30px;background:#a3a6ae;"></div>
<div style="left:378.49px;top:49.00px;width:1.10px;height:1.30px;background:#a3a6ae;"></div>
<div style="left:435.91px;top:49.00px;width:1.10px;height:1.30px;background:#a3a6ae;"></div>
<div style="left:493.32px;top:49.00px;width:1.10px;height:1.30px;background:#a3a6ae;"></div>
<div style="left:550.73px;top:49.00px;width:1.10px;height:1.30px;background:#a3a6ae;"></div>
<div style="left:608.15px;top:49.00px;width:1.10px;height:1.30px;background:#a3a6ae;"></div>
<div style="left:665.56px;top:49.00px;width:1.10px;height:1.30px;background:#a3a6ae;"></div>
<div style="left:722.98px;top:49.00px;width:1.10px;height:1.30px;background:#a3a6ae;"></div>
<div style="left:780.39px;top:49.00px;width:1.10px;height:1.30px;background:#a3a6ae;"></div>
<div style="left:837.80px;top:49.00px;width:1.10px;height:1.30px;background:#a3a6ae;"></div>
<div style="left:895.22px;top:49.00px;width:1.10px;height:1.30px;background:#a3a6ae;"></div>
<div style="left:952.63px;top:49.00px;width:1.10px;height:1.30px;background:#a3a6ae;"></div>
<div style="left:1010.04px;top:49.00px;width:1.10px;height:1.30px;background:#a3a6ae;"></div>
<div style="left:1067.46px;top:49.00px;width:1.10px;height:1.30px;background:#a3a6ae;"></div>
<div style="left:1124.87px;top:49.00px;width:1.10px;height:1.30px;background:#a3a6ae;"></div>
<div style="left:1182.29px;top:49.00px;width:1.10px;height:1.30px;background:#a3a6ae;"></div>
<div style="left:1239.70px;top:49.00px;width:1.10px;height:1.30px;background:#a3a6ae;"></div>
<div style="left:1297.12px;top:49.00px;width:1.10px;height:1.30px;background:#a3a6ae;"></div>
<div style="left:1354.53px;top:49.00px;width:1.10px;height:1.30px;background:#a3a6ae;"></div>
<div style="left:1411.94px;top:49.00px;width:1.10px;height:1.30px;background:#a3a6ae;"></div>
<div style="left:1469.36px;top:49.00px;width:1.10px;height:1.30px;background:#a3a6ae;"></div>
<div style="left:1526.77px;top:49.00px;width:1.10px;height:1.30px;background:#a3a6ae;"></div>
<svg style="left:23.20px;top:49.3px" width="1467.80" height="16" viewBox="0 0 1467.80 16"><rect x="1.5" y="1.5" width="1464.80" height="12.6" fill="#2e313a" stroke="#c9cace" stroke-width="1"/><path d="M1.5 1.5 L12 7.8 L1.5 14.1" fill="none" stroke="#c9cace" stroke-width="1"/><path d="M1466.30 1.5 L1455.80 7.8 L1466.30 14.1" fill="none" stroke="#c9cace" stroke-width="1"/></svg>
<svg style="left:0;top:0" width="1330" height="28" viewBox="0 0 1330 28"><rect x="4.2" y="5" width="1306.3" height="17.4" rx="4.5" fill="#2e313a" stroke="#868a94" stroke-width="2.5"/><rect x="29.03" y="7.0" width="1136.97" height="1.4" fill="#a6dd3d"/><rect x="78.09" y="8.76" width="245.30" height="0.72" fill="#e8962c"/><rect x="740.40" y="8.76" width="98.12" height="0.72" fill="#e8962c"/><rect x="936.64" y="8.76" width="98.12" height="0.72" fill="#e8962c"/><rect x="78.09" y="9.47" width="245.30" height="0.72" fill="#e8962c"/><rect x="544.16" y="9.47" width="98.12" height="0.72" fill="#e8962c"/><rect x="740.40" y="9.47" width="98.12" height="0.72" fill="#e8962c"/><rect x="936.64" y="9.47" width="98.12" height="0.72" fill="#e8962c"/><rect x="29.03" y="10.18" width="49.06" height="0.72" fill="#e8962c"/><rect x="78.09" y="10.18" width="245.30" height="0.72" fill="#e8962c"/><rect x="740.40" y="10.18" width="98.12" height="0.72" fill="#e8962c"/><rect x="78.09" y="10.89" width="220.77" height="0.72" fill="#e8962c"/><rect x="298.86" y="10.89" width="441.54" height="0.72" fill="#e8962c"/><rect x="740.40" y="10.89" width="98.12" height="0.72" fill="#e8962c"/><rect x="1034.76" y="10.89" width="98.12" height="0.72" fill="#1cd4ee"/><rect x="1132.88" y="10.89" width="109.89" height="0.72" fill="#e8962c"/><rect x="176.21" y="11.60" width="147.18" height="0.72" fill="#e8962c"/><rect x="740.40" y="11.60" width="98.12" height="0.72" fill="#e8962c"/><rect x="1034.76" y="11.60" width="98.12" height="0.72" fill="#1cd4ee"/><rect x="1210.03" y="11.60" width="32.75" height="0.72" fill="#e8962c"/><rect x="29.03" y="12.31" width="294.36" height="0.72" fill="#4a70cc"/><rect x="724.21" y="12.31" width="114.31" height="0.72" fill="#4a70cc"/><rect x="936.64" y="12.31" width="196.24" height="0.72" fill="#4a70cc"/><rect x="1132.88" y="12.31" width="36.79" height="0.72" fill="#1cd4ee"/><rect x="1169.67" y="12.31" width="36.80" height="0.72" fill="#1cd4ee"/><rect x="1206.47" y="12.31" width="36.30" height="0.72" fill="#1cd4ee"/><rect x="176.21" y="14.44" width="147.18" height="0.72" fill="#1cd4ee"/><rect x="740.40" y="14.44" width="294.36" height="0.72" fill="#e8962c"/><rect x="69.85" y="15.15" width="155.42" height="0.72" fill="#1cd4ee"/><rect x="740.40" y="15.15" width="294.36" height="0.72" fill="#e8962c"/><rect x="69.85" y="15.86" width="253.54" height="0.72" fill="#1cd4ee"/><rect x="642.28" y="15.86" width="98.12" height="0.72" fill="#1cd4ee"/><rect x="740.40" y="15.86" width="196.24" height="0.72" fill="#1cd4ee"/><rect x="1034.76" y="15.86" width="98.12" height="0.72" fill="#1cd4ee"/><rect x="1132.88" y="15.86" width="36.79" height="0.72" fill="#1cd4ee"/><rect x="1169.67" y="15.86" width="36.80" height="0.72" fill="#1cd4ee"/><rect x="1206.47" y="15.86" width="36.30" height="0.72" fill="#1cd4ee"/><rect x="69.85" y="16.57" width="253.54" height="0.72" fill="#1cd4ee"/><rect x="544.16" y="16.57" width="98.12" height="0.72" fill="#e8962c"/><rect x="642.28" y="16.57" width="196.24" height="0.72" fill="#1cd4ee"/><rect x="1034.76" y="16.57" width="98.12" height="0.72" fill="#1cd4ee"/><rect x="1132.88" y="16.57" width="36.79" height="0.72" fill="#1cd4ee"/><rect x="1169.67" y="16.57" width="36.80" height="0.72" fill="#1cd4ee"/><rect x="1206.47" y="16.57" width="36.30" height="0.72" fill="#1cd4ee"/><rect x="29.03" y="17.99" width="64.76" height="0.72" fill="#4a70cc"/><rect x="274.33" y="17.99" width="367.95" height="0.72" fill="#d9cf3c"/><rect x="1212.48" y="17.99" width="17.54" height="0.72" fill="#0a7cbb"/><rect x="274.33" y="18.70" width="269.83" height="0.72" fill="#7ad65c"/><rect x="544.16" y="18.70" width="196.24" height="0.72" fill="#7ad65c"/><rect x="740.40" y="18.70" width="392.48" height="0.72" fill="#7ad65c"/><rect x="1132.88" y="18.70" width="36.79" height="0.72" fill="#7ad65c"/><rect x="1169.67" y="18.70" width="36.80" height="0.72" fill="#7ad65c"/><rect x="1206.47" y="18.70" width="36.30" height="0.72" fill="#7ad65c"/><rect x="274.33" y="19.41" width="269.83" height="0.72" fill="#4a70cc"/><rect x="764.93" y="20.12" width="171.71" height="0.72" fill="#0a7cbb"/><rect x="1212.48" y="20.12" width="17.54" height="0.72" fill="#0a7cbb"/><rect x="740.40" y="20.83" width="196.24" height="0.72" fill="#7ad65c"/><rect x="1214.32" y="20.83" width="28.45" height="0.72" fill="#7ad65c"/></svg>
<div style="left:1311.00px;top:21.00px;width:592.00px;height:2.70px;background:#202126;"></div>
<div style="left:29.00px;top:843.20px;width:1.20px;height:2.60px;background:#8c8f98;"></div>
<div style="left:47.75px;top:843.20px;width:1.20px;height:2.60px;background:#8c8f98;"></div>
<div style="left:66.50px;top:843.20px;width:1.20px;height:2.60px;background:#8c8f98;"></div>
<div style="left:87.75px;top:843.20px;width:1.20px;height:2.60px;background:#8c8f98;"></div>
<div style="left:135.25px;top:843.20px;width:1.20px;height:2.60px;background:#8c8f98;"></div>
<div style="left:159.00px;top:843.20px;width:1.20px;height:2.60px;background:#8c8f98;"></div>
<div style="left:185.25px;top:843.20px;width:1.20px;height:2.60px;background:#8c8f98;"></div>
<div style="left:211.50px;top:843.20px;width:1.20px;height:2.60px;background:#8c8f98;"></div>
<div style="left:269.00px;top:843.20px;width:1.20px;height:2.60px;background:#8c8f98;"></div>
<div style="left:297.75px;top:843.20px;width:1.20px;height:2.60px;background:#8c8f98;"></div>
<div style="left:349.50px;top:843.20px;width:1.20px;height:2.60px;background:#8c8f98;"></div>
<div style="left:406.50px;top:843.20px;width:1.20px;height:2.60px;background:#8c8f98;"></div>
<div style="left:462.75px;top:843.20px;width:1.20px;height:2.60px;background:#8c8f98;"></div>
<div style="left:544.00px;top:843.20px;width:1.20px;height:2.60px;background:#8c8f98;"></div>
<div style="left:596.50px;top:843.20px;width:1.20px;height:2.60px;background:#8c8f98;"></div>
<div style="left:622.75px;top:843.20px;width:1.20px;height:2.60px;background:#8c8f98;"></div>
<div style="left:676.50px;top:843.20px;width:1.20px;height:2.60px;background:#8c8f98;"></div>
<div style="left:709.00px;top:843.20px;width:1.20px;height:2.60px;background:#8c8f98;"></div>
<div style="left:736.50px;top:843.20px;width:1.20px;height:2.60px;background:#8c8f98;"></div>
<div style="left:759.00px;top:843.20px;width:1.20px;height:2.60px;background:#8c8f98;"></div>
<div style="left:824.00px;top:843.20px;width:1.20px;height:2.60px;background:#8c8f98;"></div>
<div style="left:855.25px;top:843.20px;width:1.20px;height:2.60px;background:#8c8f98;"></div>
<div style="left:881.50px;top:843.20px;width:1.20px;height:2.60px;background:#8c8f98;"></div>
<div style="left:916.50px;top:843.20px;width:1.20px;height:2.60px;background:#8c8f98;"></div>
<div style="left:1013.00px;top:843.20px;width:1.20px;height:2.60px;background:#8c8f98;"></div>
<div style="left:1068.00px;top:843.20px;width:1.20px;height:2.60px;background:#8c8f98;"></div>
<div style="left:1121.50px;top:843.20px;width:1.20px;height:2.60px;background:#8c8f98;"></div>
<div style="left:1181.50px;top:843.20px;width:1.20px;height:2.60px;background:#8c8f98;"></div>
<div style="left:1209.50px;top:843.20px;width:1.20px;height:2.60px;background:#8c8f98;"></div>
<div style="left:1291.50px;top:843.20px;width:1.20px;height:2.60px;background:#8c8f98;"></div>
<div style="left:1309.00px;top:843.20px;width:1.20px;height:2.60px;background:#8c8f98;"></div>
<div style="left:1321.50px;top:843.20px;width:1.20px;height:2.60px;background:#8c8f98;"></div>
<div style="left:1355.25px;top:843.20px;width:1.20px;height:2.60px;background:#8c8f98;"></div>
<div style="left:1374.00px;top:843.20px;width:1.20px;height:2.60px;background:#8c8f98;"></div>
<div style="left:1394.00px;top:843.20px;width:1.20px;height:2.60px;background:#8c8f98;"></div>
<div style="left:1434.25px;top:843.20px;width:1.20px;height:2.60px;background:#8c8f98;"></div>
<div style="left:1441.75px;top:843.20px;width:1.20px;height:2.60px;background:#8c8f98;"></div>
<div style="left:1448.00px;top:843.20px;width:1.20px;height:2.60px;background:#8c8f98;"></div>
<div style="left:1455.50px;top:843.20px;width:1.20px;height:4.20px;background:#8c8f98;"></div>
<div style="left:1461.75px;top:843.20px;width:1.20px;height:2.60px;background:#8c8f98;"></div>
<div style="left:1468.00px;top:843.20px;width:1.20px;height:2.60px;background:#8c8f98;"></div>
<div style="left:1474.25px;top:843.20px;width:1.20px;height:2.60px;background:#8c8f98;"></div>
<div style="left:1480.50px;top:843.20px;width:1.20px;height:2.60px;background:#8c8f98;"></div>
<div style="left:1493.00px;top:843.20px;width:1.20px;height:2.60px;background:#8c8f98;"></div>
<div style="left:1499.25px;top:843.20px;width:1.20px;height:2.60px;background:#8c8f98;"></div>
<div style="left:1505.50px;top:843.20px;width:1.20px;height:2.60px;background:#8c8f98;"></div>
<div style="left:1513.00px;top:843.20px;width:1.20px;height:2.60px;background:#8c8f98;"></div>
<div style="left:1519.25px;top:843.20px;width:1.20px;height:4.20px;background:#8c8f98;"></div>
<div style="left:1525.50px;top:843.20px;width:1.20px;height:2.60px;background:#8c8f98;"></div>
<div style="left:1531.75px;top:843.20px;width:1.20px;height:2.60px;background:#8c8f98;"></div>
<div style="left:1429.10px;top:843.20px;width:1.20px;height:2.60px;background:#8c8f98;"></div>
<div style="left:33.65px;top:843.20px;width:1.40px;height:5.70px;background:#f58cba;"></div>
<div style="left:43.90px;top:843.20px;width:1.40px;height:5.70px;background:#f58cba;"></div>
<div style="left:52.65px;top:843.20px;width:1.40px;height:5.70px;background:#f58cba;"></div>
<div style="left:75.15px;top:843.20px;width:1.40px;height:5.70px;background:#f58cba;"></div>
<div style="left:91.40px;top:843.20px;width:1.40px;height:5.70px;background:#f58cba;"></div>
<div style="left:148.65px;top:843.20px;width:1.40px;height:5.70px;background:#f58cba;"></div>
<div style="left:234.90px;top:843.20px;width:1.40px;height:5.70px;background:#f58cba;"></div>
<div style="left:306.40px;top:843.20px;width:1.40px;height:5.70px;background:#f58cba;"></div>
<div style="left:321.40px;top:843.20px;width:1.40px;height:5.70px;background:#f58cba;"></div>
<div style="left:349.90px;top:843.20px;width:1.40px;height:5.70px;background:#f58cba;"></div>
<div style="left:426.40px;top:843.20px;width:1.40px;height:5.70px;background:#f58cba;"></div>
<div style="left:435.15px;top:843.20px;width:1.40px;height:5.70px;background:#f58cba;"></div>
<div style="left:485.15px;top:843.20px;width:1.40px;height:5.70px;background:#f58cba;"></div>
<div style="left:492.65px;top:843.20px;width:1.40px;height:5.70px;background:#f58cba;"></div>
<div style="left:513.15px;top:843.20px;width:1.40px;height:5.70px;background:#f58cba;"></div>
<div style="left:531.90px;top:843.20px;width:1.40px;height:5.70px;background:#f58cba;"></div>
<div style="left:550.15px;top:843.20px;width:1.40px;height:5.70px;background:#f58cba;"></div>
<div style="left:560.15px;top:843.20px;width:1.40px;height:5.70px;background:#f58cba;"></div>
<div style="left:572.65px;top:843.20px;width:1.40px;height:5.70px;background:#f58cba;"></div>
<div style="left:578.90px;top:843.20px;width:1.40px;height:5.70px;background:#f58cba;"></div>
<div style="left:598.90px;top:843.20px;width:1.40px;height:5.70px;background:#f58cba;"></div>
<div style="left:612.65px;top:843.20px;width:1.40px;height:5.70px;background:#f58cba;"></div>
<div style="left:636.40px;top:843.20px;width:1.40px;height:5.70px;background:#f58cba;"></div>
<div style="left:693.90px;top:843.20px;width:1.40px;height:5.70px;background:#f58cba;"></div>
<div style="left:712.65px;top:843.20px;width:1.40px;height:5.70px;background:#f58cba;"></div>
<div style="left:722.65px;top:843.20px;width:1.40px;height:5.70px;background:#f58cba;"></div>
<div style="left:728.90px;top:843.20px;width:1.40px;height:5.70px;background:#f58cba;"></div>
<div style="left:746.40px;top:843.20px;width:1.40px;height:5.70px;background:#f58cba;"></div>
<div style="left:761.40px;top:843.20px;width:1.40px;height:5.70px;background:#f58cba;"></div>
<div style="left:803.90px;top:843.20px;width:1.40px;height:5.70px;background:#f58cba;"></div>
<div style="left:812.65px;top:843.20px;width:1.40px;height:5.70px;background:#f58cba;"></div>
<div style="left:837.65px;top:843.20px;width:1.40px;height:5.70px;background:#f58cba;"></div>
<div style="left:866.40px;top:843.20px;width:1.40px;height:5.70px;background:#f58cba;"></div>
<div style="left:876.40px;top:843.20px;width:1.40px;height:5.70px;background:#f58cba;"></div>
<div style="left:923.90px;top:843.20px;width:1.40px;height:5.70px;background:#f58cba;"></div>
<div style="left:981.65px;top:843.20px;width:1.40px;height:5.70px;background:#f58cba;"></div>
<div style="left:1018.90px;top:843.20px;width:1.40px;height:5.70px;background:#f58cba;"></div>
<div style="left:1038.90px;top:843.20px;width:1.40px;height:5.70px;background:#f58cba;"></div>
<div style="left:1047.65px;top:843.20px;width:1.40px;height:5.70px;background:#f58cba;"></div>
<div style="left:1095.90px;top:843.20px;width:1.40px;height:5.70px;background:#f58cba;"></div>
<div style="left:1115.40px;top:843.20px;width:1.40px;height:5.70px;background:#f58cba;"></div>
<div style="left:1145.15px;top:843.20px;width:1.40px;height:5.70px;background:#f58cba;"></div>
<div style="left:1153.90px;top:843.20px;width:1.40px;height:5.70px;background:#f58cba;"></div>
<div style="left:1172.90px;top:843.20px;width:1.40px;height:5.70px;background:#f58cba;"></div>
<div style="left:1211.40px;top:843.20px;width:1.40px;height:5.70px;background:#f58cba;"></div>
<div style="left:1230.15px;top:843.20px;width:1.40px;height:5.70px;background:#f58cba;"></div>
<div style="left:1248.90px;top:843.20px;width:1.40px;height:5.70px;background:#f58cba;"></div>
<div style="left:1267.90px;top:843.20px;width:1.40px;height:5.70px;background:#f58cba;"></div>
<div style="left:1316.40px;top:843.20px;width:1.40px;height:5.70px;background:#f58cba;"></div>
<div style="left:1325.15px;top:843.20px;width:1.40px;height:5.70px;background:#f58cba;"></div>
<div style="left:1411.65px;top:843.20px;width:1.40px;height:5.70px;background:#f58cba;"></div>
<div style="left:1421.65px;top:843.20px;width:1.40px;height:5.70px;background:#f58cba;"></div>
<div class="tl" style="left:9.20px;top:847.3px">0:00</div>
<svg style="left:109.75px;top:843px" width="6" height="12" viewBox="0 0 6 12"><path d="M1.45 0.4 V10.2 H3.7" fill="none" stroke="#9a9da6" stroke-width="1.05"/></svg>
<div class="tl" style="left:114.15px;top:847.3px">0:10</div>
<svg style="left:239.50px;top:843px" width="6" height="12" viewBox="0 0 6 12"><path d="M1.45 0.4 V10.2 H3.7" fill="none" stroke="#9a9da6" stroke-width="1.05"/></svg>
<div class="tl" style="left:243.90px;top:847.3px">0:20</div>
<svg style="left:377.25px;top:843px" width="6" height="12" viewBox="0 0 6 12"><path d="M1.45 0.4 V10.2 H3.7" fill="none" stroke="#9a9da6" stroke-width="1.05"/></svg>
<div class="tl" style="left:381.65px;top:847.3px">0:30</div>
<svg style="left:517.25px;top:843px" width="6" height="12" viewBox="0 0 6 12"><path d="M1.45 0.4 V10.2 H3.7" fill="none" stroke="#9a9da6" stroke-width="1.05"/></svg>
<div class="tl" style="left:521.65px;top:847.3px">0:40</div>
<svg style="left:647.25px;top:843px" width="6" height="12" viewBox="0 0 6 12"><path d="M1.45 0.4 V10.2 H3.7" fill="none" stroke="#9a9da6" stroke-width="1.05"/></svg>
<div class="tl" style="left:651.65px;top:847.3px">0:50</div>
<svg style="left:792.25px;top:843px" width="6" height="12" viewBox="0 0 6 12"><path d="M1.45 0.4 V10.2 H3.7" fill="none" stroke="#9a9da6" stroke-width="1.05"/></svg>
<div class="tl" style="left:796.65px;top:847.3px">1:00</div>
<svg style="left:951.00px;top:843px" width="6" height="12" viewBox="0 0 6 12"><path d="M1.45 0.4 V10.2 H3.7" fill="none" stroke="#9a9da6" stroke-width="1.05"/></svg>
<div class="tl" style="left:955.40px;top:847.3px">1:10</div>
<svg style="left:1095.00px;top:843px" width="6" height="12" viewBox="0 0 6 12"><path d="M1.45 0.4 V10.2 H3.7" fill="none" stroke="#9a9da6" stroke-width="1.05"/></svg>
<div class="tl" style="left:1099.40px;top:847.3px">1:20</div>
<svg style="left:1243.50px;top:843px" width="6" height="12" viewBox="0 0 6 12"><path d="M1.45 0.4 V10.2 H3.7" fill="none" stroke="#9a9da6" stroke-width="1.05"/></svg>
<div class="tl" style="left:1247.90px;top:847.3px">1:30</div>
<svg style="left:1336.00px;top:843px" width="6" height="12" viewBox="0 0 6 12"><path d="M1.45 0.4 V10.2 H3.7" fill="none" stroke="#9a9da6" stroke-width="1.05"/></svg>
<div class="tl" style="left:1340.40px;top:847.3px">1:40</div>
<svg style="left:1422.50px;top:843px" width="6" height="12" viewBox="0 0 6 12"><path d="M1.45 0.4 V10.2 H3.7" fill="none" stroke="#9a9da6" stroke-width="1.05"/></svg>
<div class="tl" style="left:1426.90px;top:847.3px">1:50</div>
<svg style="left:1486.25px;top:843px" width="6" height="12" viewBox="0 0 6 12"><path d="M1.45 0.4 V10.2 H3.7" fill="none" stroke="#9a9da6" stroke-width="1.05"/></svg>
<div class="tl" style="left:1490.65px;top:847.3px">2:10</div>
<svg style="left:5px;top:844px" width="7" height="8" viewBox="0 0 7 8"><path d="M0.2 0 L5.4 6.2 L0.2 6.2 Z" fill="#2fd3ee"/></svg>
<div style="left:1528.30px;top:23.30px;width:374.70px;height:818.00px;background:#2e313a;"></div>
<div style="left:1526.50px;top:64.00px;width:1.80px;height:778.00px;background:#1b1c21;"></div>
<div style="left:1532.00px;top:80.00px;width:1.80px;height:762.00px;background:#1b1c21;"></div>
<div class="t" style="left:1538px;top:35.3px;width:35.6px;height:15.6px;border-radius:8px;background:#1a1b20;color:#e2e3e6;font-weight:bold;font-size:13px;text-align:center;line-height:17.6px">Set</div>
<div style="left:1588.00px;top:35.20px;width:28.00px;height:15.60px;background:#ff94c2;border:1px solid #17181c;"><svg style="left:7.7px;top:2.0px" width="10" height="10" viewBox="0 0 10 10"><path d="M2.4 7.6 L7.7 2.7" stroke="#101114" stroke-width="1.25"/><circle cx="2.4" cy="7.6" r="1.75" fill="#101114"/><circle cx="7.7" cy="2.7" r="1.75" fill="#101114"/></svg></div>
<div style="left:1621.60px;top:35.20px;width:28.20px;height:15.60px;background:#17181d;"><svg style="left:8.6px;top:3.2px" width="11" height="11" viewBox="0 0 11 11"><path d="M2.9 5.2 V3.6 A2.6 2.6 0 0 1 8.1 3.6 V5.2" fill="none" stroke="#d5d6da" stroke-width="1.3"/><rect x="1.1" y="4.6" width="8.8" height="4.7" fill="#d5d6da"/></svg></div>
<svg style="left:1538.00px;top:57.6px" width="15.6" height="15.6" viewBox="0 0 15.6 15.6"><circle cx="7.8" cy="7.8" r="7.8" fill="#1a1b20"/><path d="M3.3 7.8 L8.3 4.1 V7.05 H12.5 V8.55 H8.3 V11.5 Z" fill="#8b8e97"/></svg>
<svg style="left:1558.00px;top:57.6px" width="15.6" height="15.6" viewBox="0 0 15.6 15.6"><circle cx="7.8" cy="7.8" r="7.8" fill="#1a1b20"/><path d="M12.3 7.8 L7.3 4.1 V7.05 H3.1 V8.55 H7.3 V11.5 Z" fill="#dcdde0"/></svg>
<div style="left:1533.80px;top:80.65px;width:369.20px;height:22.25px;background:#3f424c;"></div>
<div style="left:1533.80px;top:102.65px;width:369.20px;height:2.40px;background:#1d1e23;"></div>
<div style="left:1656.90px;top:79.15px;width:2.00px;height:23.75px;background:#1d1e23;"></div>
<svg style="left:1533px;top:80px" width="126" height="25" viewBox="0 0 126 25"><rect x="0.8" y="1.25" width="123.1" height="21.25" fill="#87ff67"/></svg>
<div style="left:1533.80px;top:80.85px;width:123.10px;height:21.70px;background:transparent;"><svg style="left:4.2px;top:3.1px" width="16" height="16" viewBox="0 0 16 16"><circle cx="8" cy="8" r="7.2" fill="none" stroke="#25471c" stroke-width="1.15"/><path d="M4.9 5.4 H11.1 M4.9 8 H11.1 M4.9 10.6 H11.1" stroke="#25471c" stroke-width="1.25"/></svg><span class="hn" style="left:28.3px;top:5.6px;color:#25471c">1 Group</span></div>
<div style="left:1661.80px;top:83.75px;width:87.40px;height:15.90px;background:#40434d;border:1px solid #1a1b20;"></div>
<div style="left:1751.70px;top:79.15px;width:2.20px;height:23.75px;background:#1d1e23;"></div>
<div style="left:1756.80px;top:83.75px;width:57.00px;height:15.90px;background:#17181d;"><div class="num" style="left:0;top:1px;width:57px;color:#e0e1e5;line-height:14.9px">1</div></div>
<div class="btn" style="left:1819.1px;top:83.75px;width:25.9px;height:15.9px;line-height:16.6px">S</div>
<div style="left:1881.30px;top:86.95px;width:3.40px;height:13.00px;background:#1b1c21;"></div>
<div style="left:1881.30px;top:84.05px;width:3.40px;height:1.00px;background:#1b1c21;"></div>
<div style="left:1881.30px;top:85.55px;width:3.40px;height:1.00px;background:#1b1c21;"></div>
<div style="left:1886.60px;top:86.95px;width:3.40px;height:13.00px;background:#1b1c21;"></div>
<div style="left:1886.60px;top:84.05px;width:3.40px;height:1.00px;background:#1b1c21;"></div>
<div style="left:1886.60px;top:85.55px;width:3.40px;height:1.00px;background:#1b1c21;"></div>
<div style="left:1533.80px;top:104.40px;width:369.20px;height:22.25px;background:#33363f;"></div>
<div style="left:1533.80px;top:126.40px;width:369.20px;height:2.40px;background:#1d1e23;"></div>
<div style="left:1656.90px;top:102.90px;width:2.00px;height:23.75px;background:#1d1e23;"></div>
<svg style="left:1533px;top:104px" width="126" height="25" viewBox="0 0 126 25"><rect x="0.8" y="1.00" width="123.1" height="21.25" fill="#a1784e"/></svg>
<div style="left:1533.80px;top:104.60px;width:123.10px;height:21.70px;background:transparent;"><svg style="left:4.2px;top:3.1px" width="16" height="16" viewBox="0 0 16 16"><circle cx="8" cy="8" r="7.2" fill="none" stroke="#2d2115" stroke-width="1.15"/><path d="M5.75 4.0 L12.1 8 L5.75 12.0 Z" fill="#2d2115"/></svg><span class="hn" style="left:29.3px;top:5.6px;color:#2d2115">strings de fou</span></div>
<div style="left:1661.80px;top:107.50px;width:87.40px;height:15.90px;background:#30333c;border:1px solid #1a1b20;"></div>
<div style="left:1751.70px;top:102.90px;width:2.20px;height:23.75px;background:#1d1e23;"></div>
<div style="left:1756.80px;top:107.50px;width:57.00px;height:15.90px;background:#17181d;"><div class="num" style="left:1px;top:1px;width:55px;height:13.8px;background:#ff94c2;color:#15161a;line-height:14.9px">4</div></div>
<div class="btn" style="left:1819.1px;top:107.50px;width:25.9px;height:15.9px;line-height:16.6px">S</div>
<div class="btn" style="left:1850px;top:107.50px;width:26.3px;height:15.9px"><svg style="left:8.7px;top:3.4px" width="9" height="9" viewBox="0 0 9 9"><circle cx="4.5" cy="4.5" r="4.4" fill="#d3d4d8"/><path d="M5.45 1.2 V6" stroke="#17181d" stroke-width="1.15"/><ellipse cx="4.2" cy="6.1" rx="1.75" ry="1.3" fill="#17181d"/></svg></div>
<div style="left:1881.30px;top:110.70px;width:3.40px;height:13.00px;background:#1b1c21;"></div>
<div style="left:1881.30px;top:107.80px;width:3.40px;height:1.00px;background:#1b1c21;"></div>
<div style="left:1881.30px;top:109.30px;width:3.40px;height:1.00px;background:#1b1c21;"></div>
<div style="left:1886.60px;top:110.70px;width:3.40px;height:13.00px;background:#1b1c21;"></div>
<div style="left:1886.60px;top:107.80px;width:3.40px;height:1.00px;background:#1b1c21;"></div>
<div style="left:1886.60px;top:109.30px;width:3.40px;height:1.00px;background:#1b1c21;"></div>
<div style="left:1533.80px;top:128.15px;width:369.20px;height:22.25px;background:#33363f;"></div>
<div style="left:1533.80px;top:150.15px;width:369.20px;height:2.40px;background:#1d1e23;"></div>
<div style="left:1656.90px;top:126.65px;width:2.00px;height:23.75px;background:#1d1e23;"></div>
<svg style="left:1533px;top:128px" width="126" height="25" viewBox="0 0 126 25"><rect x="0.8" y="0.75" width="123.1" height="21.25" fill="#ffa529"/></svg>
<div style="left:1533.80px;top:128.35px;width:123.10px;height:21.70px;background:transparent;"><svg style="left:4.2px;top:3.1px" width="16" height="16" viewBox="0 0 16 16"><circle cx="8" cy="8" r="7.2" fill="none" stroke="#472e0b" stroke-width="1.15"/><path d="M5.75 4.0 L12.1 8 L5.75 12.0 Z" fill="#472e0b"/></svg><span class="hn" style="left:29.3px;top:5.6px;color:#472e0b">5 MIDI</span></div>
<div style="left:1661.80px;top:131.25px;width:87.40px;height:15.90px;background:#17181d;border:1px solid #15161a;"><span class="rt" style="left:1.6px;top:0.9px">1-Kontakt 7</span><svg style="left:75.3px;top:3.6px" width="9" height="7" viewBox="0 0 9 7"><path d="M0.3 0.4 H8.3 L4.3 6.3 Z" fill="#d8dadf"/></svg></div>
<div style="left:1751.70px;top:126.65px;width:2.20px;height:23.75px;background:#1d1e23;"></div>
<div style="left:1756.80px;top:131.25px;width:57.00px;height:15.90px;background:#17181d;"><div class="num" style="left:1px;top:1px;width:55px;height:13.8px;background:#ff94c2;color:#15161a;line-height:14.9px">5</div></div>
<div class="btn" style="left:1819.1px;top:131.25px;width:25.9px;height:15.9px;line-height:16.6px">S</div>
<div class="btn" style="left:1850px;top:131.25px;width:26.3px;height:15.9px"><svg style="left:8.7px;top:3.4px" width="9" height="9" viewBox="0 0 9 9"><circle cx="4.5" cy="4.5" r="4.4" fill="#d3d4d8"/><path d="M5.45 1.2 V6" stroke="#17181d" stroke-width="1.15"/><ellipse cx="4.2" cy="6.1" rx="1.75" ry="1.3" fill="#17181d"/></svg></div>
<svg style="left:1883px;top:128px" width="6" height="24" viewBox="0 0 6 24"><circle cx="3" cy="5.70" r="2.1" fill="#131418"/><circle cx="3" cy="8.55" r="2.1" fill="#131418"/><circle cx="3" cy="11.40" r="2.1" fill="#131418"/><circle cx="3" cy="14.25" r="2.1" fill="#131418"/><circle cx="3" cy="17.10" r="2.1" fill="#131418"/></svg>
<div style="left:1533.80px;top:151.90px;width:369.20px;height:22.25px;background:#33363f;"></div>
<div style="left:1533.80px;top:173.90px;width:369.20px;height:2.40px;background:#1d1e23;"></div>
<div style="left:1656.90px;top:150.40px;width:2.00px;height:23.75px;background:#1d1e23;"></div>
<svg style="left:1533px;top:152px" width="126" height="25" viewBox="0 0 126 25"><rect x="0.8" y="0.50" width="123.1" height="21.25" fill="#ffa529"/></svg>
<div style="left:1533.80px;top:152.10px;width:123.10px;height:21.70px;background:transparent;"><svg style="left:4.2px;top:3.1px" width="16" height="16" viewBox="0 0 16 16"><circle cx="8" cy="8" r="7.2" fill="none" stroke="#472e0b" stroke-width="1.15"/><path d="M5.75 4.0 L12.1 8 L5.75 12.0 Z" fill="#472e0b"/></svg><span class="hn" style="left:29.3px;top:5.6px;color:#472e0b">6 MIDI</span></div>
<div style="left:1661.80px;top:155.00px;width:87.40px;height:15.90px;background:#17181d;border:1px solid #15161a;"><span class="rt" style="left:1.6px;top:0.9px">2-Kontakt 7</span><svg style="left:75.3px;top:3.6px" width="9" height="7" viewBox="0 0 9 7"><path d="M0.3 0.4 H8.3 L4.3 6.3 Z" fill="#d8dadf"/></svg></div>
<div style="left:1751.70px;top:150.40px;width:2.20px;height:23.75px;background:#1d1e23;"></div>
<div style="left:1756.80px;top:155.00px;width:57.00px;height:15.90px;background:#17181d;"><div class="num" style="left:1px;top:1px;width:55px;height:13.8px;background:#ff94c2;color:#15161a;line-height:14.9px">6</div></div>
<div class="btn" style="left:1819.1px;top:155.00px;width:25.9px;height:15.9px;line-height:16.6px">S</div>
<div class="btn" style="left:1850px;top:155.00px;width:26.3px;height:15.9px"><svg style="left:8.7px;top:3.4px" width="9" height="9" viewBox="0 0 9 9"><circle cx="4.5" cy="4.5" r="4.4" fill="#d3d4d8"/><path d="M5.45 1.2 V6" stroke="#17181d" stroke-width="1.15"/><ellipse cx="4.2" cy="6.1" rx="1.75" ry="1.3" fill="#17181d"/></svg></div>
<svg style="left:1883px;top:152px" width="6" height="24" viewBox="0 0 6 24"><circle cx="3" cy="5.45" r="2.1" fill="#131418"/><circle cx="3" cy="8.30" r="2.1" fill="#131418"/><circle cx="3" cy="11.15" r="2.1" fill="#131418"/><circle cx="3" cy="14.00" r="2.1" fill="#131418"/><circle cx="3" cy="16.85" r="2.1" fill="#131418"/></svg>
<div style="left:1533.80px;top:175.65px;width:369.20px;height:22.25px;background:#33363f;"></div>
<div style="left:1533.80px;top:197.65px;width:369.20px;height:2.40px;background:#1d1e23;"></div>
<div style="left:1656.90px;top:174.15px;width:2.00px;height:23.75px;background:#1d1e23;"></div>
<svg style="left:1533px;top:175px" width="126" height="25" viewBox="0 0 126 25"><rect x="0.8" y="1.25" width="123.1" height="21.25" fill="#ffa529"/></svg>
<div style="left:1533.80px;top:175.85px;width:123.10px;height:21.70px;background:transparent;"><svg style="left:4.2px;top:3.1px" width="16" height="16" viewBox="0 0 16 16"><circle cx="8" cy="8" r="7.2" fill="none" stroke="#472e0b" stroke-width="1.15"/><path d="M5.75 4.0 L12.1 8 L5.75 12.0 Z" fill="#472e0b"/></svg><span class="hn" style="left:29.3px;top:5.6px;color:#472e0b">7 MIDI</span></div>
<div style="left:1661.80px;top:178.75px;width:87.40px;height:15.90px;background:#17181d;border:1px solid #15161a;"><span class="rt" style="left:1.6px;top:0.9px">3-Kontakt 7</span><svg style="left:75.3px;top:3.6px" width="9" height="7" viewBox="0 0 9 7"><path d="M0.3 0.4 H8.3 L4.3 6.3 Z" fill="#d8dadf"/></svg></div>
<div style="left:1751.70px;top:174.15px;width:2.20px;height:23.75px;background:#1d1e23;"></div>
<div style="left:1756.80px;top:178.75px;width:57.00px;height:15.90px;background:#17181d;"><div class="num" style="left:1px;top:1px;width:55px;height:13.8px;background:#ff94c2;color:#15161a;line-height:14.9px">7</div></div>
<div class="btn" style="left:1819.1px;top:178.75px;width:25.9px;height:15.9px;line-height:16.6px">S</div>
<div class="btn" style="left:1850px;top:178.75px;width:26.3px;height:15.9px"><svg style="left:8.7px;top:3.4px" width="9" height="9" viewBox="0 0 9 9"><circle cx="4.5" cy="4.5" r="4.4" fill="#d3d4d8"/><path d="M5.45 1.2 V6" stroke="#17181d" stroke-width="1.15"/><ellipse cx="4.2" cy="6.1" rx="1.75" ry="1.3" fill="#17181d"/></svg></div>
<svg style="left:1883px;top:175px" width="6" height="24" viewBox="0 0 6 24"><circle cx="3" cy="6.20" r="2.1" fill="#131418"/><circle cx="3" cy="9.05" r="2.1" fill="#131418"/><circle cx="3" cy="11.90" r="2.1" fill="#131418"/><circle cx="3" cy="14.75" r="2.1" fill="#131418"/><circle cx="3" cy="17.60" r="2.1" fill="#131418"/></svg>
<div style="left:1533.80px;top:199.40px;width:369.20px;height:22.25px;background:#33363f;"></div>
<div style="left:1533.80px;top:221.40px;width:369.20px;height:2.40px;background:#1d1e23;"></div>
<div style="left:1656.90px;top:197.90px;width:2.00px;height:23.75px;background:#1d1e23;"></div>
<svg style="left:1533px;top:199px" width="126" height="25" viewBox="0 0 126 25"><rect x="0.8" y="1.00" width="123.1" height="21.25" fill="#ffa529"/></svg>
<div style="left:1533.80px;top:199.60px;width:123.10px;height:21.70px;background:transparent;"><svg style="left:4.2px;top:3.1px" width="16" height="16" viewBox="0 0 16 16"><circle cx="8" cy="8" r="7.2" fill="none" stroke="#472e0b" stroke-width="1.15"/><path d="M5.75 4.0 L12.1 8 L5.75 12.0 Z" fill="#472e0b"/></svg><span class="hn" style="left:29.3px;top:5.6px;color:#472e0b">8 MIDI</span></div>
<div style="left:1661.80px;top:202.50px;width:87.40px;height:15.90px;background:#17181d;border:1px solid #15161a;"><span class="rt" style="left:1.6px;top:0.9px">4-Kontakt 7</span><svg style="left:75.3px;top:3.6px" width="9" height="7" viewBox="0 0 9 7"><path d="M0.3 0.4 H8.3 L4.3 6.3 Z" fill="#d8dadf"/></svg></div>
<div style="left:1751.70px;top:197.90px;width:2.20px;height:23.75px;background:#1d1e23;"></div>
<div style="left:1756.80px;top:202.50px;width:57.00px;height:15.90px;background:#17181d;"><div class="num" style="left:1px;top:1px;width:55px;height:13.8px;background:#ff94c2;color:#15161a;line-height:14.9px">8</div></div>
<div class="btn" style="left:1819.1px;top:202.50px;width:25.9px;height:15.9px;line-height:16.6px">S</div>
<div class="btn" style="left:1850px;top:202.50px;width:26.3px;height:15.9px"><svg style="left:8.7px;top:3.4px" width="9" height="9" viewBox="0 0 9 9"><circle cx="4.5" cy="4.5" r="4.4" fill="#d3d4d8"/><path d="M5.45 1.2 V6" stroke="#17181d" stroke-width="1.15"/><ellipse cx="4.2" cy="6.1" rx="1.75" ry="1.3" fill="#17181d"/></svg></div>
<svg style="left:1883px;top:199px" width="6" height="24" viewBox="0 0 6 24"><circle cx="3" cy="5.95" r="2.1" fill="#131418"/><circle cx="3" cy="8.80" r="2.1" fill="#131418"/><circle cx="3" cy="11.65" r="2.1" fill="#131418"/><circle cx="3" cy="14.50" r="2.1" fill="#131418"/><circle cx="3" cy="17.35" r="2.1" fill="#131418"/></svg>
<div style="left:1533.80px;top:223.15px;width:369.20px;height:22.25px;background:#33363f;"></div>
<div style="left:1533.80px;top:245.15px;width:369.20px;height:2.40px;background:#1d1e23;"></div>
<div style="left:1656.90px;top:221.65px;width:2.00px;height:23.75px;background:#1d1e23;"></div>
<svg style="left:1533px;top:223px" width="126" height="25" viewBox="0 0 126 25"><rect x="0.8" y="0.75" width="123.1" height="21.25" fill="#ffa529"/></svg>
<div style="left:1533.80px;top:223.35px;width:123.10px;height:21.70px;background:transparent;"><svg style="left:4.2px;top:3.1px" width="16" height="16" viewBox="0 0 16 16"><circle cx="8" cy="8" r="7.2" fill="none" stroke="#472e0b" stroke-width="1.15"/><path d="M5.75 4.0 L12.1 8 L5.75 12.0 Z" fill="#472e0b"/></svg><span class="hn" style="left:29.3px;top:5.6px;color:#472e0b">9 MIDI</span></div>
<div style="left:1661.80px;top:226.25px;width:87.40px;height:15.90px;background:#17181d;border:1px solid #15161a;"><span class="rt" style="left:1.6px;top:0.9px">5-Kontakt 7</span><svg style="left:75.3px;top:3.6px" width="9" height="7" viewBox="0 0 9 7"><path d="M0.3 0.4 H8.3 L4.3 6.3 Z" fill="#d8dadf"/></svg></div>
<div style="left:1751.70px;top:221.65px;width:2.20px;height:23.75px;background:#1d1e23;"></div>
<div style="left:1756.80px;top:226.25px;width:57.00px;height:15.90px;background:#17181d;"><div class="num" style="left:1px;top:1px;width:55px;height:13.8px;background:#ff94c2;color:#15161a;line-height:14.9px">9</div></div>
<div class="btn" style="left:1819.1px;top:226.25px;width:25.9px;height:15.9px;line-height:16.6px">S</div>
<div class="btn" style="left:1850px;top:226.25px;width:26.3px;height:15.9px"><svg style="left:8.7px;top:3.4px" width="9" height="9" viewBox="0 0 9 9"><circle cx="4.5" cy="4.5" r="4.4" fill="#d3d4d8"/><path d="M5.45 1.2 V6" stroke="#17181d" stroke-width="1.15"/><ellipse cx="4.2" cy="6.1" rx="1.75" ry="1.3" fill="#17181d"/></svg></div>
<svg style="left:1883px;top:223px" width="6" height="24" viewBox="0 0 6 24"><circle cx="3" cy="5.70" r="2.1" fill="#131418"/><circle cx="3" cy="8.55" r="2.1" fill="#131418"/><circle cx="3" cy="11.40" r="2.1" fill="#131418"/><circle cx="3" cy="14.25" r="2.1" fill="#131418"/><circle cx="3" cy="17.10" r="2.1" fill="#131418"/></svg>
<div style="left:1533.80px;top:246.90px;width:369.20px;height:22.25px;background:#33363f;"></div>
<div style="left:1533.80px;top:268.90px;width:369.20px;height:2.40px;background:#1d1e23;"></div>
<div style="left:1656.90px;top:245.40px;width:2.00px;height:23.75px;background:#1d1e23;"></div>
<svg style="left:1533px;top:247px" width="126" height="25" viewBox="0 0 126 25"><rect x="0.8" y="0.50" width="123.1" height="21.25" fill="#5480e4"/></svg>
<div style="left:1533.80px;top:247.10px;width:123.10px;height:21.70px;background:transparent;"><svg style="left:4.2px;top:3.1px" width="16" height="16" viewBox="0 0 16 16"><circle cx="8" cy="8" r="7.2" fill="none" stroke="#17233f" stroke-width="1.15"/><path d="M5.75 4.0 L12.1 8 L5.75 12.0 Z" fill="#17233f"/></svg><span class="hn" style="left:29.3px;top:5.6px;color:#17233f">10 MIDI</span></div>
<div style="left:1661.80px;top:250.00px;width:87.40px;height:15.90px;background:#17181d;border:1px solid #15161a;"><span class="rt" style="left:1.6px;top:0.9px">6-Kontakt 7</span><svg style="left:75.3px;top:3.6px" width="9" height="7" viewBox="0 0 9 7"><path d="M0.3 0.4 H8.3 L4.3 6.3 Z" fill="#d8dadf"/></svg></div>
<div style="left:1751.70px;top:245.40px;width:2.20px;height:23.75px;background:#1d1e23;"></div>
<div style="left:1756.80px;top:250.00px;width:57.00px;height:15.90px;background:#17181d;"><div class="num" style="left:1px;top:1px;width:55px;height:13.8px;background:#ff94c2;color:#15161a;line-height:14.9px">10</div></div>
<div class="btn" style="left:1819.1px;top:250.00px;width:25.9px;height:15.9px;line-height:16.6px">S</div>
<div class="btn" style="left:1850px;top:250.00px;width:26.3px;height:15.9px"><svg style="left:8.7px;top:3.4px" width="9" height="9" viewBox="0 0 9 9"><circle cx="4.5" cy="4.5" r="4.4" fill="#d3d4d8"/><path d="M5.45 1.2 V6" stroke="#17181d" stroke-width="1.15"/><ellipse cx="4.2" cy="6.1" rx="1.75" ry="1.3" fill="#17181d"/></svg></div>
<svg style="left:1883px;top:247px" width="6" height="24" viewBox="0 0 6 24"><circle cx="3" cy="5.45" r="2.1" fill="#131418"/><circle cx="3" cy="8.30" r="2.1" fill="#131418"/><circle cx="3" cy="11.15" r="2.1" fill="#131418"/><circle cx="3" cy="14.00" r="2.1" fill="#131418"/><circle cx="3" cy="16.85" r="2.1" fill="#131418"/></svg>
<div style="left:1533.80px;top:270.65px;width:369.20px;height:22.25px;background:#33363f;"></div>
<div style="left:1533.80px;top:292.65px;width:369.20px;height:2.40px;background:#1d1e23;"></div>
<div style="left:1656.90px;top:269.15px;width:2.00px;height:23.75px;background:#1d1e23;"></div>
<svg style="left:1533px;top:270px" width="126" height="25" viewBox="0 0 126 25"><rect x="0.8" y="1.25" width="123.1" height="21.25" fill="#cc9927"/></svg>
<div style="left:1533.80px;top:270.85px;width:123.10px;height:21.70px;background:transparent;"><svg style="left:4.2px;top:3.1px" width="16" height="16" viewBox="0 0 16 16"><circle cx="8" cy="8" r="7.2" fill="none" stroke="#392a0a" stroke-width="1.15"/><path d="M5.75 4.0 L12.1 8 L5.75 12.0 Z" fill="#392a0a"/></svg><span class="hn" style="left:29.3px;top:5.6px;color:#392a0a">11 Audio</span></div>
<div style="left:1661.80px;top:273.75px;width:87.40px;height:15.90px;background:#30333c;border:1px solid #1a1b20;"></div>
<div style="left:1751.70px;top:269.15px;width:2.20px;height:23.75px;background:#1d1e23;"></div>
<div style="left:1756.80px;top:273.75px;width:57.00px;height:15.90px;background:#17181d;"><div class="num" style="left:1px;top:1px;width:55px;height:13.8px;background:#46dfea;color:#15161a;line-height:14.9px">11</div></div>
<div class="btn" style="left:1819.1px;top:273.75px;width:25.9px;height:15.9px;line-height:16.6px">S</div>
<div class="btn" style="left:1850px;top:273.75px;width:26.3px;height:15.9px"><svg style="left:8.7px;top:3.4px" width="9" height="9" viewBox="0 0 9 9"><circle cx="4.5" cy="4.5" r="4.3" fill="#d3d4d8"/></svg></div>
<div style="left:1881.30px;top:276.95px;width:3.40px;height:13.00px;background:#1b1c21;"></div>
<div style="left:1881.30px;top:274.05px;width:3.40px;height:1.00px;background:#1b1c21;"></div>
<div style="left:1881.30px;top:275.55px;width:3.40px;height:1.00px;background:#1b1c21;"></div>
<div style="left:1886.60px;top:276.95px;width:3.40px;height:13.00px;background:#1b1c21;"></div>
<div style="left:1886.60px;top:274.05px;width:3.40px;height:1.00px;background:#1b1c21;"></div>
<div style="left:1886.60px;top:275.55px;width:3.40px;height:1.00px;background:#1b1c21;"></div>
<div style="left:1533.80px;top:294.40px;width:369.20px;height:22.25px;background:#33363f;"></div>
<div style="left:1533.80px;top:316.40px;width:369.20px;height:2.40px;background:#1d1e23;"></div>
<div style="left:1656.90px;top:292.90px;width:2.00px;height:23.75px;background:#1d1e23;"></div>
<svg style="left:1533px;top:294px" width="126" height="25" viewBox="0 0 126 25"><rect x="0.8" y="1.00" width="123.1" height="21.25" fill="#1aff2f"/></svg>
<div style="left:1533.80px;top:294.60px;width:123.10px;height:21.70px;background:transparent;"><svg style="left:4.2px;top:3.1px" width="16" height="16" viewBox="0 0 16 16"><circle cx="8" cy="8" r="7.2" fill="none" stroke="#07470d" stroke-width="1.15"/><path d="M5.75 4.0 L12.1 8 L5.75 12.0 Z" fill="#07470d"/></svg><span class="hn" style="left:29.3px;top:5.6px;color:#07470d">woodwinds de</span></div>
<div style="left:1661.80px;top:297.50px;width:87.40px;height:15.90px;background:#30333c;border:1px solid #1a1b20;"></div>
<div style="left:1751.70px;top:292.90px;width:2.20px;height:23.75px;background:#1d1e23;"></div>
<div style="left:1756.80px;top:297.50px;width:57.00px;height:15.90px;background:#17181d;"><div class="num" style="left:0;top:1px;width:57px;color:#e0e1e5;line-height:14.9px">12</div></div>
<div class="btn" style="left:1819.1px;top:297.50px;width:25.9px;height:15.9px;line-height:16.6px">S</div>
<div class="btn" style="left:1850px;top:297.50px;width:26.3px;height:15.9px"><svg style="left:8.7px;top:3.4px" width="9" height="9" viewBox="0 0 9 9"><circle cx="4.5" cy="4.5" r="4.4" fill="#d3d4d8"/><path d="M5.45 1.2 V6" stroke="#17181d" stroke-width="1.15"/><ellipse cx="4.2" cy="6.1" rx="1.75" ry="1.3" fill="#17181d"/></svg></div>
<div style="left:1881.30px;top:300.70px;width:3.40px;height:13.00px;background:#1b1c21;"></div>
<div style="left:1881.30px;top:297.80px;width:3.40px;height:1.00px;background:#1b1c21;"></div>
<div style="left:1881.30px;top:299.30px;width:3.40px;height:1.00px;background:#1b1c21;"></div>
<div style="left:1886.60px;top:300.70px;width:3.40px;height:13.00px;background:#1b1c21;"></div>
<div style="left:1886.60px;top:297.80px;width:3.40px;height:1.00px;background:#1b1c21;"></div>
<div style="left:1886.60px;top:299.30px;width:3.40px;height:1.00px;background:#1b1c21;"></div>
<div style="left:1533.80px;top:318.15px;width:369.20px;height:22.25px;background:#33363f;"></div>
<div style="left:1533.80px;top:340.15px;width:369.20px;height:2.40px;background:#1d1e23;"></div>
<div style="left:1656.90px;top:316.65px;width:2.00px;height:23.75px;background:#1d1e23;"></div>
<svg style="left:1533px;top:318px" width="126" height="25" viewBox="0 0 126 25"><rect x="0.8" y="0.75" width="123.1" height="21.25" fill="#19e9ff"/></svg>
<div style="left:1533.80px;top:318.35px;width:123.10px;height:21.70px;background:transparent;"><svg style="left:4.2px;top:3.1px" width="16" height="16" viewBox="0 0 16 16"><circle cx="8" cy="8" r="7.2" fill="none" stroke="#074147" stroke-width="1.15"/><path d="M5.75 4.0 L12.1 8 L5.75 12.0 Z" fill="#074147"/></svg><span class="hn" style="left:29.3px;top:5.6px;color:#074147">13 MIDI</span></div>
<div style="left:1661.80px;top:321.25px;width:87.40px;height:15.90px;background:#17181d;border:1px solid #15161a;"><span class="rt" style="left:1.6px;top:0.9px">1-Kontakt 7</span><svg style="left:75.3px;top:3.6px" width="9" height="7" viewBox="0 0 9 7"><path d="M0.3 0.4 H8.3 L4.3 6.3 Z" fill="#d8dadf"/></svg></div>
<div style="left:1751.70px;top:316.65px;width:2.20px;height:23.75px;background:#1d1e23;"></div>
<div style="left:1756.80px;top:321.25px;width:57.00px;height:15.90px;background:#17181d;"><div class="num" style="left:1px;top:1px;width:55px;height:13.8px;background:#ff94c2;color:#15161a;line-height:14.9px">13</div></div>
<div class="btn" style="left:1819.1px;top:321.25px;width:25.9px;height:15.9px;line-height:16.6px">S</div>
<div class="btn" style="left:1850px;top:321.25px;width:26.3px;height:15.9px"><svg style="left:8.7px;top:3.4px" width="9" height="9" viewBox="0 0 9 9"><circle cx="4.5" cy="4.5" r="4.4" fill="#d3d4d8"/><path d="M5.45 1.2 V6" stroke="#17181d" stroke-width="1.15"/><ellipse cx="4.2" cy="6.1" rx="1.75" ry="1.3" fill="#17181d"/></svg></div>
<svg style="left:1883px;top:318px" width="6" height="24" viewBox="0 0 6 24"><circle cx="3" cy="5.70" r="2.1" fill="#131418"/><circle cx="3" cy="8.55" r="2.1" fill="#131418"/><circle cx="3" cy="11.40" r="2.1" fill="#131418"/><circle cx="3" cy="14.25" r="2.1" fill="#131418"/><circle cx="3" cy="17.10" r="2.1" fill="#131418"/></svg>
<div style="left:1533.80px;top:341.90px;width:369.20px;height:22.25px;background:#33363f;"></div>
<div style="left:1533.80px;top:363.90px;width:369.20px;height:2.40px;background:#1d1e23;"></div>
<div style="left:1656.90px;top:340.40px;width:2.00px;height:23.75px;background:#1d1e23;"></div>
<svg style="left:1533px;top:342px" width="126" height="25" viewBox="0 0 126 25"><rect x="0.8" y="0.50" width="123.1" height="21.25" fill="#19e9ff"/></svg>
<div style="left:1533.80px;top:342.10px;width:123.10px;height:21.70px;background:transparent;"><svg style="left:4.2px;top:3.1px" width="16" height="16" viewBox="0 0 16 16"><circle cx="8" cy="8" r="7.2" fill="none" stroke="#074147" stroke-width="1.15"/><path d="M5.75 4.0 L12.1 8 L5.75 12.0 Z" fill="#074147"/></svg><span class="hn" style="left:29.3px;top:5.6px;color:#074147">14 MIDI</span></div>
<div style="left:1661.80px;top:345.00px;width:87.40px;height:15.90px;background:#17181d;border:1px solid #15161a;"><span class="rt" style="left:1.6px;top:0.9px">2-Kontakt 7</span><svg style="left:75.3px;top:3.6px" width="9" height="7" viewBox="0 0 9 7"><path d="M0.3 0.4 H8.3 L4.3 6.3 Z" fill="#d8dadf"/></svg></div>
<div style="left:1751.70px;top:340.40px;width:2.20px;height:23.75px;background:#1d1e23;"></div>
<div style="left:1756.80px;top:345.00px;width:57.00px;height:15.90px;background:#17181d;"><div class="num" style="left:1px;top:1px;width:55px;height:13.8px;background:#ff94c2;color:#15161a;line-height:14.9px">14</div></div>
<div class="btn" style="left:1819.1px;top:345.00px;width:25.9px;height:15.9px;line-height:16.6px">S</div>
<div class="btn" style="left:1850px;top:345.00px;width:26.3px;height:15.9px"><svg style="left:8.7px;top:3.4px" width="9" height="9" viewBox="0 0 9 9"><circle cx="4.5" cy="4.5" r="4.4" fill="#d3d4d8"/><path d="M5.45 1.2 V6" stroke="#17181d" stroke-width="1.15"/><ellipse cx="4.2" cy="6.1" rx="1.75" ry="1.3" fill="#17181d"/></svg></div>
<svg style="left:1883px;top:342px" width="6" height="24" viewBox="0 0 6 24"><circle cx="3" cy="5.45" r="2.1" fill="#131418"/><circle cx="3" cy="8.30" r="2.1" fill="#131418"/><circle cx="3" cy="11.15" r="2.1" fill="#131418"/><circle cx="3" cy="14.00" r="2.1" fill="#131418"/><circle cx="3" cy="16.85" r="2.1" fill="#131418"/></svg>
<div style="left:1533.80px;top:365.65px;width:369.20px;height:22.25px;background:#33363f;"></div>
<div style="left:1533.80px;top:387.65px;width:369.20px;height:2.40px;background:#1d1e23;"></div>
<div style="left:1656.90px;top:364.15px;width:2.00px;height:23.75px;background:#1d1e23;"></div>
<svg style="left:1533px;top:365px" width="126" height="25" viewBox="0 0 126 25"><rect x="0.8" y="1.25" width="123.1" height="21.25" fill="#19e9ff"/></svg>
<div style="left:1533.80px;top:365.85px;width:123.10px;height:21.70px;background:transparent;"><svg style="left:4.2px;top:3.1px" width="16" height="16" viewBox="0 0 16 16"><circle cx="8" cy="8" r="7.2" fill="none" stroke="#074147" stroke-width="1.15"/><path d="M5.75 4.0 L12.1 8 L5.75 12.0 Z" fill="#074147"/></svg><span class="hn" style="left:29.3px;top:5.6px;color:#074147">15 MIDI</span></div>
<div style="left:1661.80px;top:368.75px;width:87.40px;height:15.90px;background:#17181d;border:1px solid #15161a;"><span class="rt" style="left:1.6px;top:0.9px">3-Kontakt 7</span><svg style="left:75.3px;top:3.6px" width="9" height="7" viewBox="0 0 9 7"><path d="M0.3 0.4 H8.3 L4.3 6.3 Z" fill="#d8dadf"/></svg></div>
<div style="left:1751.70px;top:364.15px;width:2.20px;height:23.75px;background:#1d1e23;"></div>
<div style="left:1756.80px;top:368.75px;width:57.00px;height:15.90px;background:#17181d;"><div class="num" style="left:1px;top:1px;width:55px;height:13.8px;background:#ff94c2;color:#15161a;line-height:14.9px">15</div></div>
<div class="btn" style="left:1819.1px;top:368.75px;width:25.9px;height:15.9px;line-height:16.6px">S</div>
<div class="btn" style="left:1850px;top:368.75px;width:26.3px;height:15.9px"><svg style="left:8.7px;top:3.4px" width="9" height="9" viewBox="0 0 9 9"><circle cx="4.5" cy="4.5" r="4.4" fill="#d3d4d8"/><path d="M5.45 1.2 V6" stroke="#17181d" stroke-width="1.15"/><ellipse cx="4.2" cy="6.1" rx="1.75" ry="1.3" fill="#17181d"/></svg></div>
<svg style="left:1883px;top:365px" width="6" height="24" viewBox="0 0 6 24"><circle cx="3" cy="6.20" r="2.1" fill="#131418"/><circle cx="3" cy="9.05" r="2.1" fill="#131418"/><circle cx="3" cy="11.90" r="2.1" fill="#131418"/><circle cx="3" cy="14.75" r="2.1" fill="#131418"/><circle cx="3" cy="17.60" r="2.1" fill="#131418"/></svg>
<div style="left:1533.80px;top:389.40px;width:369.20px;height:22.25px;background:#33363f;"></div>
<div style="left:1533.80px;top:411.40px;width:369.20px;height:2.40px;background:#1d1e23;"></div>
<div style="left:1656.90px;top:387.90px;width:2.00px;height:23.75px;background:#1d1e23;"></div>
<svg style="left:1533px;top:389px" width="126" height="25" viewBox="0 0 126 25"><rect x="0.8" y="1.00" width="123.1" height="21.25" fill="#19e9ff"/></svg>
<div style="left:1533.80px;top:389.60px;width:123.10px;height:21.70px;background:transparent;"><svg style="left:4.2px;top:3.1px" width="16" height="16" viewBox="0 0 16 16"><circle cx="8" cy="8" r="7.2" fill="none" stroke="#074147" stroke-width="1.15"/><path d="M5.75 4.0 L12.1 8 L5.75 12.0 Z" fill="#074147"/></svg><span class="hn" style="left:29.3px;top:5.6px;color:#074147">16 MIDI</span></div>
<div style="left:1661.80px;top:392.50px;width:87.40px;height:15.90px;background:#17181d;border:1px solid #15161a;"><span class="rt" style="left:1.6px;top:0.9px">4-Kontakt 7</span><svg style="left:75.3px;top:3.6px" width="9" height="7" viewBox="0 0 9 7"><path d="M0.3 0.4 H8.3 L4.3 6.3 Z" fill="#d8dadf"/></svg></div>
<div style="left:1751.70px;top:387.90px;width:2.20px;height:23.75px;background:#1d1e23;"></div>
<div style="left:1756.80px;top:392.50px;width:57.00px;height:15.90px;background:#17181d;"><div class="num" style="left:1px;top:1px;width:55px;height:13.8px;background:#ff94c2;color:#15161a;line-height:14.9px">16</div></div>
<div class="btn" style="left:1819.1px;top:392.50px;width:25.9px;height:15.9px;line-height:16.6px">S</div>
<div class="btn" style="left:1850px;top:392.50px;width:26.3px;height:15.9px"><svg style="left:8.7px;top:3.4px" width="9" height="9" viewBox="0 0 9 9"><circle cx="4.5" cy="4.5" r="4.4" fill="#d3d4d8"/><path d="M5.45 1.2 V6" stroke="#17181d" stroke-width="1.15"/><ellipse cx="4.2" cy="6.1" rx="1.75" ry="1.3" fill="#17181d"/></svg></div>
<svg style="left:1883px;top:389px" width="6" height="24" viewBox="0 0 6 24"><circle cx="3" cy="5.95" r="2.1" fill="#131418"/><circle cx="3" cy="8.80" r="2.1" fill="#131418"/><circle cx="3" cy="11.65" r="2.1" fill="#131418"/><circle cx="3" cy="14.50" r="2.1" fill="#131418"/><circle cx="3" cy="17.35" r="2.1" fill="#131418"/></svg>
<div style="left:1533.80px;top:413.15px;width:369.20px;height:22.25px;background:#33363f;"></div>
<div style="left:1533.80px;top:435.15px;width:369.20px;height:2.40px;background:#1d1e23;"></div>
<div style="left:1656.90px;top:411.65px;width:2.00px;height:23.75px;background:#1d1e23;"></div>
<svg style="left:1533px;top:413px" width="126" height="25" viewBox="0 0 126 25"><rect x="0.8" y="0.75" width="123.1" height="21.25" fill="#92a7ff"/></svg>
<div style="left:1533.80px;top:413.35px;width:123.10px;height:21.70px;background:transparent;"><svg style="left:4.2px;top:3.1px" width="16" height="16" viewBox="0 0 16 16"><circle cx="8" cy="8" r="7.2" fill="none" stroke="#282e47" stroke-width="1.15"/><path d="M5.75 4.0 L12.1 8 L5.75 12.0 Z" fill="#282e47"/></svg><span class="hn" style="left:29.3px;top:5.6px;color:#282e47">misc de taré</span></div>
<div style="left:1661.80px;top:416.25px;width:87.40px;height:15.90px;background:#30333c;border:1px solid #1a1b20;"></div>
<div style="left:1751.70px;top:411.65px;width:2.20px;height:23.75px;background:#1d1e23;"></div>
<div style="left:1756.80px;top:416.25px;width:57.00px;height:15.90px;background:#17181d;"><div class="num" style="left:0;top:1px;width:57px;color:#e0e1e5;line-height:14.9px">17</div></div>
<div class="btn" style="left:1819.1px;top:416.25px;width:25.9px;height:15.9px;line-height:16.6px">S</div>
<div class="btn" style="left:1850px;top:416.25px;width:26.3px;height:15.9px"><svg style="left:8.7px;top:3.4px" width="9" height="9" viewBox="0 0 9 9"><circle cx="4.5" cy="4.5" r="4.4" fill="#d3d4d8"/><path d="M5.45 1.2 V6" stroke="#17181d" stroke-width="1.15"/><ellipse cx="4.2" cy="6.1" rx="1.75" ry="1.3" fill="#17181d"/></svg></div>
<div style="left:1881.30px;top:419.45px;width:3.40px;height:13.00px;background:#1b1c21;"></div>
<div style="left:1881.30px;top:416.55px;width:3.40px;height:1.00px;background:#1b1c21;"></div>
<div style="left:1881.30px;top:418.05px;width:3.40px;height:1.00px;background:#1b1c21;"></div>
<div style="left:1886.60px;top:419.45px;width:3.40px;height:13.00px;background:#1b1c21;"></div>
<div style="left:1886.60px;top:416.55px;width:3.40px;height:1.00px;background:#1b1c21;"></div>
<div style="left:1886.60px;top:418.05px;width:3.40px;height:1.00px;background:#1b1c21;"></div>
<div style="left:1533.80px;top:436.90px;width:369.20px;height:22.25px;background:#33363f;"></div>
<div style="left:1533.80px;top:458.90px;width:369.20px;height:2.40px;background:#1d1e23;"></div>
<div style="left:1656.90px;top:435.40px;width:2.00px;height:23.75px;background:#1d1e23;"></div>
<svg style="left:1533px;top:437px" width="126" height="25" viewBox="0 0 126 25"><rect x="0.8" y="0.50" width="123.1" height="21.25" fill="#5480e4"/></svg>
<div style="left:1533.80px;top:437.10px;width:123.10px;height:21.70px;background:transparent;"><svg style="left:4.2px;top:3.1px" width="16" height="16" viewBox="0 0 16 16"><circle cx="8" cy="8" r="7.2" fill="none" stroke="#17233f" stroke-width="1.15"/><path d="M5.75 4.0 L12.1 8 L5.75 12.0 Z" fill="#17233f"/></svg><span class="hn" style="left:29.3px;top:5.6px;color:#17233f">18 MIDI</span></div>
<div style="left:1661.80px;top:440.00px;width:87.40px;height:15.90px;background:#17181d;border:1px solid #15161a;"><span class="rt" style="left:1.6px;top:0.9px">1-Kontakt 7</span><svg style="left:75.3px;top:3.6px" width="9" height="7" viewBox="0 0 9 7"><path d="M0.3 0.4 H8.3 L4.3 6.3 Z" fill="#d8dadf"/></svg></div>
<div style="left:1751.70px;top:435.40px;width:2.20px;height:23.75px;background:#1d1e23;"></div>
<div style="left:1756.80px;top:440.00px;width:57.00px;height:15.90px;background:#17181d;"><div class="num" style="left:1px;top:1px;width:55px;height:13.8px;background:#ff94c2;color:#15161a;line-height:14.9px">18</div></div>
<div class="btn" style="left:1819.1px;top:440.00px;width:25.9px;height:15.9px;line-height:16.6px">S</div>
<div class="btn" style="left:1850px;top:440.00px;width:26.3px;height:15.9px"><svg style="left:8.7px;top:3.4px" width="9" height="9" viewBox="0 0 9 9"><circle cx="4.5" cy="4.5" r="4.4" fill="#d3d4d8"/><path d="M5.45 1.2 V6" stroke="#17181d" stroke-width="1.15"/><ellipse cx="4.2" cy="6.1" rx="1.75" ry="1.3" fill="#17181d"/></svg></div>
<svg style="left:1883px;top:437px" width="6" height="24" viewBox="0 0 6 24"><circle cx="3" cy="5.45" r="2.1" fill="#131418"/><circle cx="3" cy="8.30" r="2.1" fill="#131418"/><circle cx="3" cy="11.15" r="2.1" fill="#131418"/><circle cx="3" cy="14.00" r="2.1" fill="#131418"/><circle cx="3" cy="16.85" r="2.1" fill="#131418"/></svg>
<div style="left:1533.80px;top:460.65px;width:369.20px;height:22.25px;background:#33363f;"></div>
<div style="left:1533.80px;top:482.65px;width:369.20px;height:2.40px;background:#1d1e23;"></div>
<div style="left:1656.90px;top:459.15px;width:2.00px;height:23.75px;background:#1d1e23;"></div>
<svg style="left:1533px;top:460px" width="126" height="25" viewBox="0 0 126 25"><rect x="0.8" y="1.25" width="123.1" height="21.25" fill="#5480e4"/></svg>
<div style="left:1533.80px;top:460.85px;width:123.10px;height:21.70px;background:transparent;"><svg style="left:4.2px;top:3.1px" width="16" height="16" viewBox="0 0 16 16"><circle cx="8" cy="8" r="7.2" fill="none" stroke="#17233f" stroke-width="1.15"/><path d="M5.75 4.0 L12.1 8 L5.75 12.0 Z" fill="#17233f"/></svg><span class="hn" style="left:29.3px;top:5.6px;color:#17233f">19 MIDI</span></div>
<div style="left:1661.80px;top:463.75px;width:87.40px;height:15.90px;background:#17181d;border:1px solid #15161a;"><span class="rt" style="left:1.6px;top:0.9px">2-Kontakt 7</span><svg style="left:75.3px;top:3.6px" width="9" height="7" viewBox="0 0 9 7"><path d="M0.3 0.4 H8.3 L4.3 6.3 Z" fill="#d8dadf"/></svg></div>
<div style="left:1751.70px;top:459.15px;width:2.20px;height:23.75px;background:#1d1e23;"></div>
<div style="left:1756.80px;top:463.75px;width:57.00px;height:15.90px;background:#17181d;"><div class="num" style="left:1px;top:1px;width:55px;height:13.8px;background:#ff94c2;color:#15161a;line-height:14.9px">19</div></div>
<div class="btn" style="left:1819.1px;top:463.75px;width:25.9px;height:15.9px;line-height:16.6px">S</div>
<div class="btn" style="left:1850px;top:463.75px;width:26.3px;height:15.9px"><svg style="left:8.7px;top:3.4px" width="9" height="9" viewBox="0 0 9 9"><circle cx="4.5" cy="4.5" r="4.4" fill="#d3d4d8"/><path d="M5.45 1.2 V6" stroke="#17181d" stroke-width="1.15"/><ellipse cx="4.2" cy="6.1" rx="1.75" ry="1.3" fill="#17181d"/></svg></div>
<svg style="left:1883px;top:460px" width="6" height="24" viewBox="0 0 6 24"><circle cx="3" cy="6.20" r="2.1" fill="#131418"/><circle cx="3" cy="9.05" r="2.1" fill="#131418"/><circle cx="3" cy="11.90" r="2.1" fill="#131418"/><circle cx="3" cy="14.75" r="2.1" fill="#131418"/><circle cx="3" cy="17.60" r="2.1" fill="#131418"/></svg>
<div style="left:1533.80px;top:484.40px;width:369.20px;height:22.25px;background:#33363f;"></div>
<div style="left:1533.80px;top:506.40px;width:369.20px;height:2.40px;background:#1d1e23;"></div>
<div style="left:1656.90px;top:482.90px;width:2.00px;height:23.75px;background:#1d1e23;"></div>
<svg style="left:1533px;top:484px" width="126" height="25" viewBox="0 0 126 25"><rect x="0.8" y="1.00" width="123.1" height="21.25" fill="#5480e4"/></svg>
<div style="left:1533.80px;top:484.60px;width:123.10px;height:21.70px;background:transparent;"><svg style="left:4.2px;top:3.1px" width="16" height="16" viewBox="0 0 16 16"><circle cx="8" cy="8" r="7.2" fill="none" stroke="#17233f" stroke-width="1.15"/><path d="M5.75 4.0 L12.1 8 L5.75 12.0 Z" fill="#17233f"/></svg><span class="hn" style="left:29.3px;top:5.6px;color:#17233f">20 MIDI</span></div>
<div style="left:1661.80px;top:487.50px;width:87.40px;height:15.90px;background:#17181d;border:1px solid #15161a;"><span class="rt" style="left:1.6px;top:0.9px">3-Kontakt 7</span><svg style="left:75.3px;top:3.6px" width="9" height="7" viewBox="0 0 9 7"><path d="M0.3 0.4 H8.3 L4.3 6.3 Z" fill="#d8dadf"/></svg></div>
<div style="left:1751.70px;top:482.90px;width:2.20px;height:23.75px;background:#1d1e23;"></div>
<div style="left:1756.80px;top:487.50px;width:57.00px;height:15.90px;background:#17181d;"><div class="num" style="left:1px;top:1px;width:55px;height:13.8px;background:#ff94c2;color:#15161a;line-height:14.9px">20</div></div>
<div class="btn" style="left:1819.1px;top:487.50px;width:25.9px;height:15.9px;line-height:16.6px">S</div>
<div class="btn" style="left:1850px;top:487.50px;width:26.3px;height:15.9px"><svg style="left:8.7px;top:3.4px" width="9" height="9" viewBox="0 0 9 9"><circle cx="4.5" cy="4.5" r="4.4" fill="#d3d4d8"/><path d="M5.45 1.2 V6" stroke="#17181d" stroke-width="1.15"/><ellipse cx="4.2" cy="6.1" rx="1.75" ry="1.3" fill="#17181d"/></svg></div>
<svg style="left:1883px;top:484px" width="6" height="24" viewBox="0 0 6 24"><circle cx="3" cy="5.95" r="2.1" fill="#131418"/><circle cx="3" cy="8.80" r="2.1" fill="#131418"/><circle cx="3" cy="11.65" r="2.1" fill="#131418"/><circle cx="3" cy="14.50" r="2.1" fill="#131418"/><circle cx="3" cy="17.35" r="2.1" fill="#131418"/></svg>
<div style="left:1533.80px;top:508.15px;width:369.20px;height:22.25px;background:#33363f;"></div>
<div style="left:1533.80px;top:530.15px;width:369.20px;height:2.40px;background:#1d1e23;"></div>
<div style="left:1656.90px;top:506.65px;width:2.00px;height:23.75px;background:#1d1e23;"></div>
<svg style="left:1533px;top:508px" width="126" height="25" viewBox="0 0 126 25"><rect x="0.8" y="0.75" width="123.1" height="21.25" fill="#007dc0"/></svg>
<div style="left:1533.80px;top:508.35px;width:123.10px;height:21.70px;background:transparent;"><svg style="left:4.2px;top:3.1px" width="16" height="16" viewBox="0 0 16 16"><circle cx="8" cy="8" r="7.2" fill="none" stroke="#002335" stroke-width="1.15"/><path d="M5.75 4.0 L12.1 8 L5.75 12.0 Z" fill="#002335"/></svg><span class="hn" style="left:29.3px;top:5.6px;color:#002335">cloches</span></div>
<div style="left:1661.80px;top:511.25px;width:87.40px;height:15.90px;background:#30333c;border:1px solid #1a1b20;"></div>
<div style="left:1751.70px;top:506.65px;width:2.20px;height:23.75px;background:#1d1e23;"></div>
<div style="left:1756.80px;top:511.25px;width:57.00px;height:15.90px;background:#17181d;"><div class="num" style="left:0;top:1px;width:57px;color:#e0e1e5;line-height:14.9px">21</div></div>
<div class="btn" style="left:1819.1px;top:511.25px;width:25.9px;height:15.9px;line-height:16.6px">S</div>
<div class="btn" style="left:1850px;top:511.25px;width:26.3px;height:15.9px"><svg style="left:8.7px;top:3.4px" width="9" height="9" viewBox="0 0 9 9"><circle cx="4.5" cy="4.5" r="4.4" fill="#d3d4d8"/><path d="M5.45 1.2 V6" stroke="#17181d" stroke-width="1.15"/><ellipse cx="4.2" cy="6.1" rx="1.75" ry="1.3" fill="#17181d"/></svg></div>
<div style="left:1881.30px;top:514.45px;width:3.40px;height:13.00px;background:#1b1c21;"></div>
<div style="left:1881.30px;top:511.55px;width:3.40px;height:1.00px;background:#1b1c21;"></div>
<div style="left:1881.30px;top:513.05px;width:3.40px;height:1.00px;background:#1b1c21;"></div>
<div style="left:1886.60px;top:514.45px;width:3.40px;height:13.00px;background:#1b1c21;"></div>
<div style="left:1886.60px;top:511.55px;width:3.40px;height:1.00px;background:#1b1c21;"></div>
<div style="left:1886.60px;top:513.05px;width:3.40px;height:1.00px;background:#1b1c21;"></div>
<div style="left:1533.80px;top:531.90px;width:369.20px;height:22.25px;background:#33363f;"></div>
<div style="left:1533.80px;top:553.90px;width:369.20px;height:2.40px;background:#1d1e23;"></div>
<div style="left:1656.90px;top:530.40px;width:2.00px;height:23.75px;background:#1d1e23;"></div>
<svg style="left:1533px;top:532px" width="126" height="25" viewBox="0 0 126 25"><rect x="0.8" y="0.50" width="123.1" height="21.25" fill="#10a4ee"/></svg>
<div style="left:1533.80px;top:532.10px;width:123.10px;height:21.70px;background:transparent;"><svg style="left:4.2px;top:3.1px" width="16" height="16" viewBox="0 0 16 16"><circle cx="8" cy="8" r="7.2" fill="none" stroke="#042d42" stroke-width="1.15"/><path d="M5.75 4.0 L12.1 8 L5.75 12.0 Z" fill="#042d42"/></svg><span class="hn" style="left:29.3px;top:5.6px;color:#042d42">22 Wavetable</span></div>
<div style="left:1661.80px;top:535.00px;width:87.40px;height:15.90px;background:#30333c;border:1px solid #1a1b20;"></div>
<div style="left:1751.70px;top:530.40px;width:2.20px;height:23.75px;background:#1d1e23;"></div>
<div style="left:1756.80px;top:535.00px;width:57.00px;height:15.90px;background:#17181d;"><div class="num" style="left:0;top:1px;width:57px;color:#e0e1e5;line-height:14.9px">22</div></div>
<div class="btn" style="left:1819.1px;top:535.00px;width:25.9px;height:15.9px;line-height:16.6px">S</div>
<div class="btn" style="left:1850px;top:535.00px;width:26.3px;height:15.9px"><svg style="left:8.7px;top:3.4px" width="9" height="9" viewBox="0 0 9 9"><circle cx="4.5" cy="4.5" r="4.4" fill="#d3d4d8"/><path d="M5.45 1.2 V6" stroke="#17181d" stroke-width="1.15"/><ellipse cx="4.2" cy="6.1" rx="1.75" ry="1.3" fill="#17181d"/></svg></div>
<div style="left:1881.30px;top:538.20px;width:3.40px;height:13.00px;background:#1b1c21;"></div>
<div style="left:1881.30px;top:535.30px;width:3.40px;height:1.00px;background:#1b1c21;"></div>
<div style="left:1881.30px;top:536.80px;width:3.40px;height:1.00px;background:#1b1c21;"></div>
<div style="left:1886.60px;top:538.20px;width:3.40px;height:13.00px;background:#1b1c21;"></div>
<div style="left:1886.60px;top:535.30px;width:3.40px;height:1.00px;background:#1b1c21;"></div>
<div style="left:1886.60px;top:536.80px;width:3.40px;height:1.00px;background:#1b1c21;"></div>
<div style="left:1533.80px;top:555.75px;width:369.20px;height:260.85px;background:#2f323b;"></div>
<div style="left:1533.80px;top:819.50px;width:369.20px;height:22.25px;background:#33363f;"></div>
<div style="left:1533.80px;top:841.50px;width:369.20px;height:2.40px;background:#1d1e23;"></div>
<div style="left:1656.90px;top:818.00px;width:2.00px;height:23.75px;background:#1d1e23;"></div>
<svg style="left:1533px;top:819px" width="126" height="25" viewBox="0 0 126 25"><rect x="0.8" y="1.10" width="123.1" height="21.25" fill="#3dc300"/></svg>
<div style="left:1533.80px;top:819.70px;width:123.10px;height:21.70px;background:transparent;"><svg style="left:4.2px;top:3.1px" width="16" height="16" viewBox="0 0 16 16"><circle cx="8" cy="8" r="7.2" fill="none" stroke="#113600" stroke-width="1.15"/><path d="M5.75 4.0 L12.1 8 L5.75 12.0 Z" fill="#113600"/></svg><span class="hn" style="left:31.6px;top:5.6px;color:#113600">Main</span></div>
<div style="left:1661.80px;top:822.60px;width:87.40px;height:15.90px;background:#17181d;border:1px solid #15161a;"><span class="rt" style="left:13px;top:0.9px">1/2</span><svg style="left:75px;top:4px" width="9" height="7" viewBox="0 0 9 7"><path d="M0.3 0.5 H8.3 L4.3 6.3 Z" fill="#d8dadf"/></svg><i style="position:absolute;left:2px;top:1px;width:1.4px;height:12px;background:#22242a"></i><i style="position:absolute;left:5px;top:1px;width:1.4px;height:12px;background:#22242a"></i></div>
<div style="left:1751.70px;top:818.00px;width:2.20px;height:23.75px;background:#1d1e23;"></div>
<div style="left:1756.80px;top:822.60px;width:57.00px;height:15.90px;background:#17181d;"><div style="left:1px;top:1px;width:46.5px;height:13.8px;background:#01899c"></div><div class="t" style="left:0;top:1.2px;width:57px;text-align:center;font-size:13px;color:#d8dadf">0</div></div>
<div style="left:1819.00px;top:822.60px;width:57.30px;height:15.90px;background:#17181d;"><div style="left:1px;top:1px;width:39px;height:13.8px;background:#4a6fcf"></div><div class="t" style="left:0;top:1.2px;width:57px;text-align:center;font-size:13px;color:#d8dadf">-6.0</div></div>
<div style="left:1881.30px;top:825.80px;width:3.40px;height:13.00px;background:#1b1c21;"></div>
<div style="left:1881.30px;top:822.90px;width:3.40px;height:1.00px;background:#1b1c21;"></div>
<div style="left:1881.30px;top:824.40px;width:3.40px;height:1.00px;background:#1b1c21;"></div>
<div style="left:1886.60px;top:825.80px;width:3.40px;height:13.00px;background:#1b1c21;"></div>
<div style="left:1886.60px;top:822.90px;width:3.40px;height:1.00px;background:#1b1c21;"></div>
<div style="left:1886.60px;top:824.40px;width:3.40px;height:1.00px;background:#1b1c21;"></div>
<div style="left:5.30px;top:816.50px;width:1897.70px;height:3.00px;background:#1d1e23;"></div>
<div style="left:1533.80px;top:842.80px;width:369.20px;height:27.00px;background:#2e313a;"></div>
<div style="left:5.30px;top:841.00px;width:1897.70px;height:1.60px;background:#1d1e23;"></div>
<div style="left:1534.10px;top:848.40px;width:18.70px;height:16.30px;background:#ff94c2;border:1px solid #15161a;"><svg style="left:0px;top:0px" width="17" height="15" viewBox="0 0 17 15"><g stroke="#15161a" stroke-linecap="round" fill="none"><path d="M3.3 5.9 V8.5" stroke-width="1.1"/><path d="M5.6 3.2 V10.8" stroke-width="1.4"/><path d="M8.3 2.2 V12" stroke-width="1.1"/><path d="M10.75 4 V9.9" stroke-width="1.4"/><path d="M13.35 5.9 V8.5" stroke-width="1.1"/></g></svg></div>
<div style="left:1556.80px;top:848.90px;width:43.00px;height:15.90px;background:#1b1c21;border:1px solid #15161a;"><div style="left:0.1px;top:0.2px;width:12.1px;height:13.6px;background:#018b9d"></div><div class="t" style="left:4.2px;top:0.4px;font-size:13px;letter-spacing:.3px;color:#d6d7da">1.00x</div></div>
<div style="left:1614.00px;top:849.20px;width:19.00px;height:15.80px;background:#17181d;"><div class="t" style="left:0;top:1.6px;width:19px;text-align:center;font-size:13px;-webkit-text-stroke:.45px;color:#dfe0e4">H</div></div>
<div style="left:1636.50px;top:849.20px;width:18.80px;height:15.80px;background:#17181d;"><div class="t" style="left:0;top:1.6px;width:18.8px;text-align:center;font-size:13px;-webkit-text-stroke:.45px;color:#dfe0e4">W</div></div>
<svg style="left:0;top:0" width="1908" height="877" viewBox="0 0 1908 877"><path d="M0 0 H1908 V877 H0 Z M8.8 5.0 H1899.4 A4.6 4.6 0 0 1 1904.0 9.6 V866.4 A4.6 4.6 0 0 1 1899.4 871.0 H8.8 A4.6 4.6 0 0 1 4.2 866.4 V9.6 A4.6 4.6 0 0 1 8.8 5.0 Z" fill="#212228" fill-rule="evenodd"/><path d="M8.8 5.0 H1899.4 A4.6 4.6 0 0 1 1904.0 9.6 V866.4 A4.6 4.6 0 0 1 1899.4 871.0 H8.8 A4.6 4.6 0 0 1 4.2 866.4 V9.6 A4.6 4.6 0 0 1 8.8 5.0 Z" fill="none" stroke="#868a94" stroke-width="2.4"/></svg>
</body></html>
